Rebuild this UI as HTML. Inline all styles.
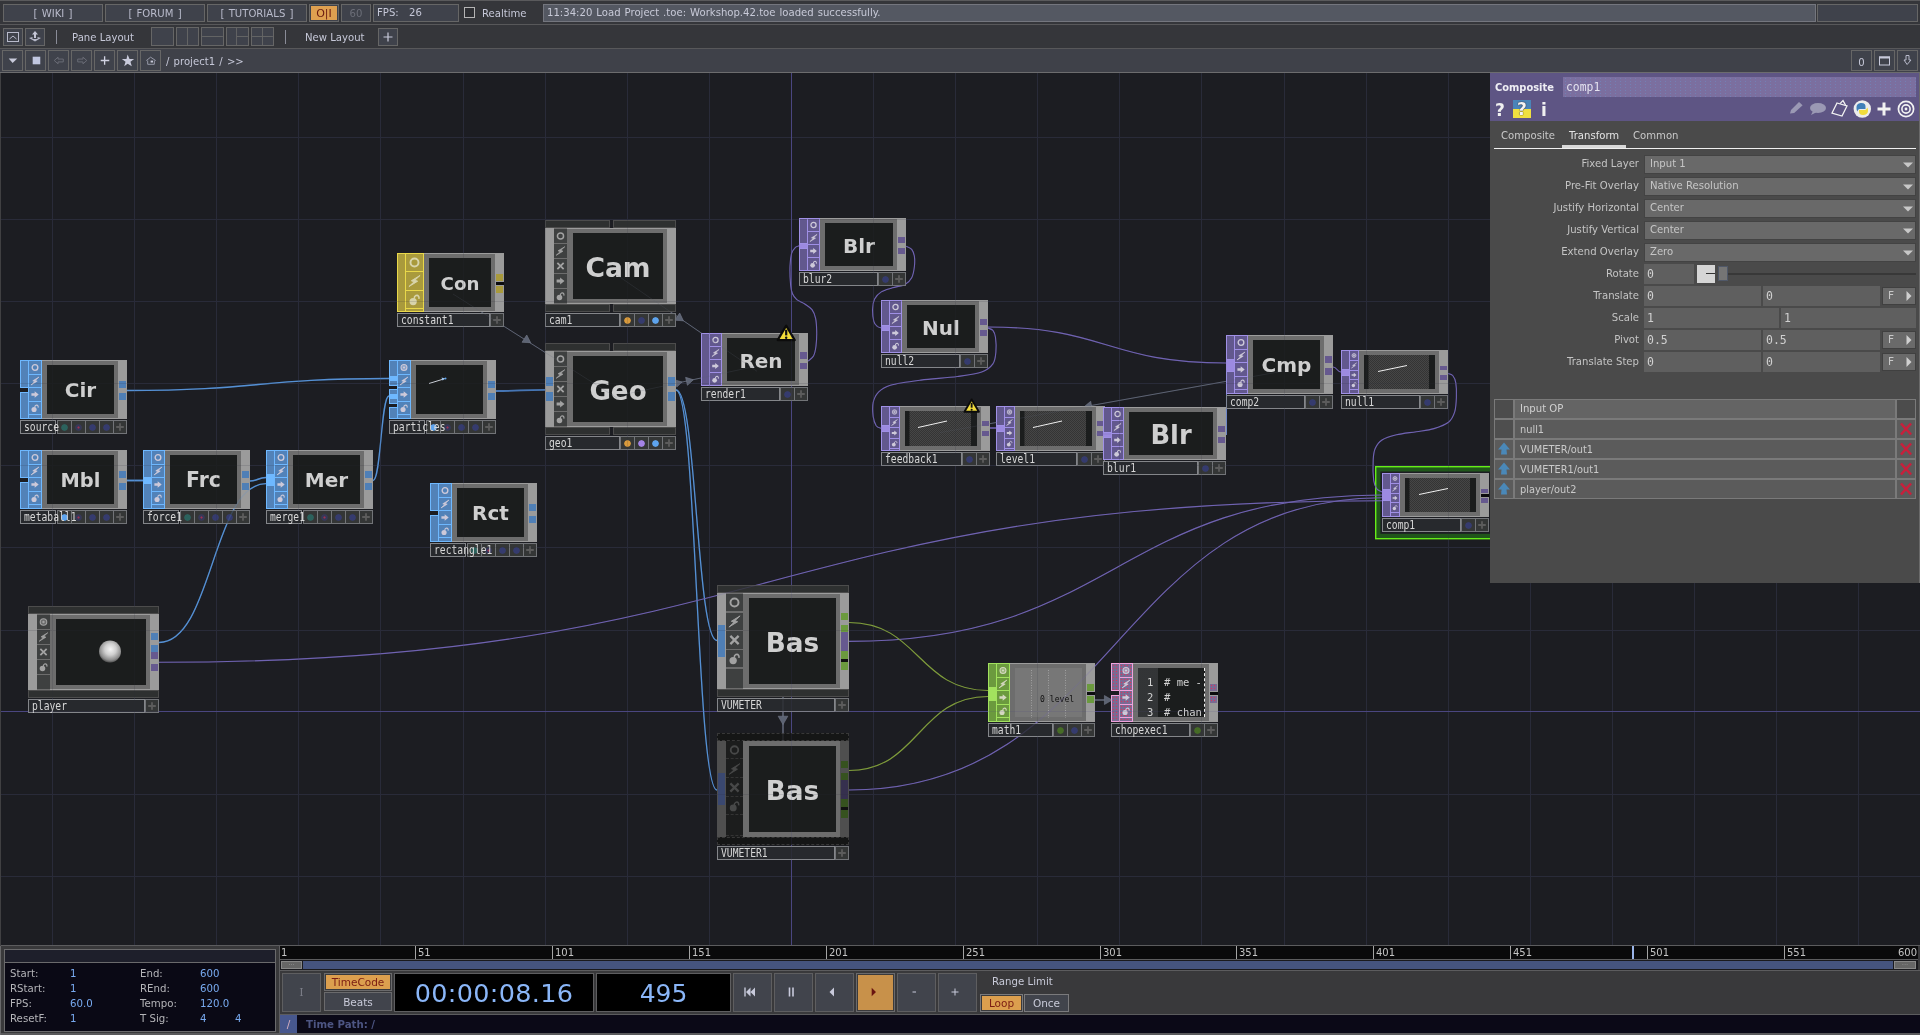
<!DOCTYPE html>
<html lang="en"><head><meta charset="utf-8"><title>TouchDesigner - Workshop.42.toe</title>
<style>
html,body{margin:0;padding:0}
body{width:1920px;height:1035px;position:relative;overflow:hidden;background:#35363a;font-family:"DejaVu Sans","Liberation Sans",sans-serif;font-size:11px;color:#c9cbd9}
div,span,svg{position:absolute;box-sizing:border-box}
span.t{white-space:nowrap}
#root{left:0;top:0;width:1920px;height:1035px;will-change:transform}
#net{left:0;top:73px;width:1920px;height:872px;overflow:hidden;background:#1c1d22}
#net>div,#net>svg{margin-top:-73px}
/* grid */
.gv{top:0;width:1px;height:1035px;background:#2b2c3a}
.gh{left:0;height:1px;width:1920px;background:#2b2c3a}
/* node parts */
.fr{background:#6d6d6d;border-top:1px solid #9c9c9c;border-bottom:1px solid #9c9c9c}
.vw{background:#1b1d1d}
.rs{background:#9b9b9b}
.lbl{background:#27292d;border:1px solid #84868a;overflow:visible}
.lbl span{left:2.5px;top:-1px;font-family:"DejaVu Sans Mono","Liberation Mono",monospace;font-size:11.5px;line-height:14px;color:#d8d8d8;white-space:nowrap;transform:scaleX(.842);transform-origin:0 0}
.mf{background:#343636;border:1px solid #727478}
.mf i{position:absolute;left:2.5px;top:2.5px;width:7px;height:7px;border-radius:50%}
.nt{font-family:"DejaVu Sans","Liberation Sans",sans-serif;font-weight:bold;color:#cfcfcf;text-align:center;white-space:nowrap}
.cs{background:#2e3030;border:1px solid #4c4c4c}
/* families */
.sop .ic,.sop .fl{background:#5282b8;border:1px solid #6eb8ff}
.sop .oc{background:#4f7fb6}
.sop .on{background:#6eb8ff}
.top .ic,.top .fl{background:#62588e;border:1px solid #a090e6}
.top .oc{background:#66598f}
.top .on{background:#9c8ae0}
.mat .ic,.mat .fl{background:#a99a3c;border:1px solid #e9d84a}
.mat .oc{background:#a99a3c}
.chop .ic,.chop .fl{background:#6b9a3e;border:1px solid #a2e25e}
.chop .oc{background:#6b9a3e}
.chop .on{background:#a2e25e}
.dat .ic,.dat .fl{background-color:#7b6a93;background-image:radial-gradient(#e0305a 0.7px,transparent 0.9px);background-size:3px 3px;border:1px solid #f0a2dc}
.dat .oc{background-color:#7b6a93;background-image:radial-gradient(#e0305a 0.7px,transparent 0.9px);background-size:3px 3px}
.comp .fl{background:#3e4040;border:0}
.fl svg{left:0;top:0;width:100%;height:100%}
.dim{opacity:.45}
/* top bars */
.btn{background:#3f424b;border:1px solid #666}
.ctr{display:flex;align-items:center;justify-content:center;white-space:nowrap}

.dimmed .rs{background-color:#4f4f4f;background-image:radial-gradient(#5c564e 0.5px,transparent 0.7px);background-size:2px 2px}
.dimmed .fl{background:#1c1d1d;border-bottom:1px dashed #343434}
.dimmed .fl svg{opacity:.32}
.dimmed .fc{background:#1c1d1d !important}
.dimmed .fr{border-color:#6d6d6d}
.dimmed .cs{background:#151616;border:1px dashed #383838}
.mat .fl svg{color:#d8d4aa !important}
.chop .fl svg{color:#d4d8c0 !important}

</style></head>
<body>
<svg width="0" height="0" style="left:-10px;top:-10px">
<defs>
<symbol id="i-ring" viewBox="0 0 14 14"><circle cx="7" cy="7" r="3.3" fill="none" stroke="currentColor" stroke-width="1.6"/></symbol>
<symbol id="i-ring2" viewBox="0 0 14 14"><circle cx="7" cy="7" r="3.5" fill="currentColor" fill-opacity=".45" stroke="currentColor" stroke-width="1.2"/><circle cx="7" cy="7" r="1.3" fill="currentColor"/></symbol>
<symbol id="i-bolt" viewBox="0 0 14 14"><path d="M11.6 2.4 L4.4 6.8 L6.6 7.7 L2.4 11.6 L9.6 7.2 L7.4 6.3 Z" fill="currentColor" stroke="currentColor" stroke-width=".8" stroke-linejoin="round"/></symbol>
<symbol id="i-arrow" viewBox="0 0 14 14"><path d="M2.8 5.5 H6.6 V3.2 L11.3 7 L6.6 10.8 V8.5 H2.8 Z" fill="currentColor"/></symbol>
<symbol id="i-lock" viewBox="0 0 14 14"><circle cx="5.9" cy="8.7" r="3" fill="currentColor"/><path d="M6.8 6.4 C6.6 3.6 9.4 2.9 10.4 4.4 C10.9 5.2 10.7 6 10.6 6.5" fill="none" stroke="currentColor" stroke-width="1.3"/></symbol>
<symbol id="i-x" viewBox="0 0 14 14"><path d="M3.6 3.6 L10.4 10.4 M10.4 3.6 L3.6 10.4" stroke="currentColor" stroke-width="1.9" fill="none"/></symbol>
<symbol id="i-plus" viewBox="0 0 14 14"><path d="M7 3.2 V10.8 M3.2 7 H10.8" stroke="#5c5c5c" stroke-width="1.8" fill="none"/></symbol>
<pattern id="chk" width="2" height="2" patternUnits="userSpaceOnUse"><rect width="2" height="2" fill="#343434"/><rect width="1" height="1" fill="#464646"/><rect x="1" y="1" width="1" height="1" fill="#464646"/></pattern>
<radialGradient id="ball" cx="52%" cy="40%" r="58%"><stop offset="0" stop-color="#f4f4f4"/><stop offset=".45" stop-color="#cfcfcf"/><stop offset=".85" stop-color="#8c8c8c"/><stop offset="1" stop-color="#5a5a5a"/></radialGradient>
</defs>
</svg>
<div id="root">
<div id="net">
<svg width="1920" height="1035" viewBox="0 0 1920 1035" style="left:0;top:0"><g id="gridg"><path d="M52.5 73V946M134.5 73V946M216.5 73V946M298.5 73V946M380.5 73V946M463.5 73V946M545.5 73V946M627.5 73V946M709.5 73V946M873.5 73V946M955.5 73V946M1037.5 73V946M1119.5 73V946M1201.5 73V946M1284.5 73V946M1366.5 73V946M1448.5 73V946M1530.5 73V946M1612.5 73V946M1694.5 73V946M1776.5 73V946M1858.5 73V946M0 137.5H1920M0 219.5H1920M0 301.5H1920M0 383.5H1920M0 465.5H1920M0 547.5H1920M0 630.5H1920M0 794.5H1920M0 876.5H1920" stroke="#292b39" stroke-width="1" fill="none"/><path d="M791.5 73V946M0 711.5H1920" stroke="#4a4680" stroke-width="1" fill="none"/></g><rect x="1375.7" y="466.7" width="600" height="72" fill="#20561b" stroke="#66ee18" stroke-width="1.4"/><rect x="1380.4" y="471.5" width="600" height="62.3" fill="#1c1d23"/><g id="wiresg"><path d="M453 294 L617 398" stroke="#5d6373" stroke-width="1" fill="none" /><path d="M5 0 L-2.50 4.33 L-2.50 -4.33 Z" fill="#5d6373" stroke="#767c8c" stroke-width=".5" transform="translate(526.5 340) rotate(33)"/><path d="M617 275.1 L757 371.3" stroke="#5d6373" stroke-width="1" fill="none" /><path d="M5 0 L-2.50 4.33 L-2.50 -4.33 Z" fill="#5d6373" stroke="#767c8c" stroke-width=".5" transform="translate(679.3 318) rotate(34.5)"/><path d="M617 396 L757 366" stroke="#5d6373" stroke-width="1" fill="none" /><path d="M4.2 0 L-2.10 3.64 L-2.10 -3.64 Z" fill="#5d6373" stroke="#767c8c" stroke-width=".5" transform="translate(678 383) rotate(-13)"/><path d="M4.7 0 L-2.35 4.07 L-2.35 -4.07 Z" fill="#5d6373" stroke="#767c8c" stroke-width=".5" transform="translate(688.8 380.8) rotate(-13)"/><path d="M1286 370.6 L940 432.6" stroke="#5d6373" stroke-width="1" fill="none" /><path d="M5 0 L-2.50 4.33 L-2.50 -4.33 Z" fill="#5d6373" stroke="#767c8c" stroke-width=".5" transform="translate(1089 406) rotate(170)"/><path d="M783 697 V741" stroke="#5d6373" stroke-width="1.6" fill="none" /><path d="M5.6 0 L-2.80 4.85 L-2.80 -4.85 Z" fill="#5d6373" stroke="#767c8c" stroke-width=".5" transform="translate(783 719) rotate(90)"/><path d="M1095 700 H1111" stroke="#5d6373" stroke-width="1.6" fill="none" /><path d="M5.2 0 L-2.60 4.50 L-2.60 -4.50 Z" fill="#5d6373" stroke="#767c8c" stroke-width=".5" transform="translate(1107 700) rotate(0)"/><path d="M127 390.5C258.0 390.5 258.0 378.5 389 378.5" stroke="#5590d4" stroke-width="1.5" fill="none" /><path d="M127 480.5 H143" stroke="#5590d4" stroke-width="1.8" fill="none" /><path d="M250 481C258.0 481 258.0 477.5 266 477.5" stroke="#5590d4" stroke-width="1.5" fill="none" /><path d="M159 642.5C212.5 642.5 212.5 483.6 266 483.6" stroke="#5590d4" stroke-width="1.3" fill="none" /><path d="M373 480.5C381.0 480.5 381.0 396 389 396" stroke="#5590d4" stroke-width="1.3" fill="none" /><path d="M496 391C520.5 391 520.5 389.8 545 389.8" stroke="#4676b4" stroke-width="1.8" fill="none" /><path d="M676 389.8C696.5 389.8 696.5 640.5 717 640.5" stroke="#5590d4" stroke-width="1.3" fill="none" /><path d="M676 390.2C696.5 390.2 696.5 790 717 790" stroke="#5590d4" stroke-width="1.3" fill="none" /><path d="M808 361.2C808.9 360.3 812.2 358.5 813.5 356C814.8 353.5 815.5 350.1 816 346C816.5 341.9 816.8 336.0 816.7 331.4C816.6 326.8 816.4 322.0 815.6 318.4C814.8 314.8 813.8 312.1 812 309.7C810.2 307.3 807.3 305.7 804.8 304C802.3 302.3 798.8 301.3 796.8 299.6C794.8 297.9 793.5 296.2 792.5 293.8C791.5 291.4 791.0 289.6 790.6 285C790.2 280.4 789.8 271.5 790 266.2C790.2 260.9 790.8 256.3 791.7 253.2C792.6 250.1 794.1 248.7 795.4 247.4C796.7 246.2 798.6 246.0 799.3 245.7" stroke="#7063b2" stroke-width="1.1" fill="none" /><path d="M906.2 246.2C907.1 246.7 910.3 247.6 911.7 249.3C913.1 251.0 914.0 253.5 914.4 256.4C914.8 259.3 914.8 262.9 914.4 266.5C914.0 270.1 913.3 274.7 911.7 277.7C910.1 280.7 908.2 282.7 905 284.4C901.8 286.1 896.5 286.6 892.5 287.8C888.5 289.1 884.3 290.0 881.3 291.9C878.3 293.8 876.0 296.1 874.6 299C873.2 301.9 872.7 305.4 872.6 309.1C872.5 312.8 873.0 318.4 873.8 321.3C874.6 324.2 876.0 325.2 877.2 326.3C878.5 327.4 880.6 327.6 881.3 327.8" stroke="#7063b2" stroke-width="1.1" fill="none" /><path d="M988 327C1107.0 327 1107.0 363 1226 363" stroke="#7063b2" stroke-width="1.1" fill="none" /><path d="M987.8 328C988.6 328.4 991.6 328.8 992.9 330.4C994.2 332.0 995.0 333.9 995.5 337.5C996.0 341.1 996.3 347.3 995.9 351.7C995.5 356.1 995.3 360.5 992.9 363.9C990.5 367.3 987.6 369.9 981.7 372C975.8 374.1 967.5 375.1 957.4 376.5C947.3 377.9 932.1 378.7 920.9 380.1C909.7 381.6 897.5 383.2 890.4 385.2C883.3 387.2 881.2 389.4 878.3 392.3C875.4 395.2 874.1 398.3 873.2 402.4C872.4 406.4 872.7 412.7 873.2 416.6C873.7 420.5 874.9 423.7 876.2 425.7C877.6 427.7 880.4 427.9 881.3 428.4" stroke="#7063b2" stroke-width="1.1" fill="none" /><path d="M990 428 H996" stroke="#7063b2" stroke-width="1.5" fill="none" /><path d="M1095 434 H1111" stroke="#7063b2" stroke-width="1.5" fill="none" /><path d="M1226.5 370 V435" stroke="#6e86c8" stroke-width="1" fill="none" /><path d="M1333 367C1337.0 367 1337.0 372 1341 372" stroke="#7063b2" stroke-width="1.1" fill="none" /><path d="M1448.1 373.5C1448.9 373.8 1451.4 373.9 1452.7 375.5C1454.0 377.1 1455.2 379.2 1455.8 382.8C1456.4 386.4 1456.6 392.5 1456.4 397.4C1456.2 402.2 1456.0 407.8 1454.7 411.9C1453.4 416.0 1452.0 419.5 1448.5 422.3C1445.0 425.1 1439.4 427.0 1434 428.6C1428.6 430.2 1422.5 430.7 1416.3 431.7C1410.0 432.7 1402.2 433.4 1396.5 434.8C1390.8 436.2 1385.5 437.8 1382 440C1378.5 442.2 1376.8 445.0 1375.3 448.3C1373.8 451.6 1373.5 454.3 1373.2 459.7C1372.9 465.1 1373.1 475.6 1373.7 480.5C1374.3 485.4 1375.4 486.9 1376.8 488.8C1378.2 490.7 1381.1 491.5 1382 492" stroke="#7063b2" stroke-width="1.1" fill="none" /><path d="M849 641.4C1115.5 641.4 1115.5 495 1382 495" stroke="#7063b2" stroke-width="1.1" fill="none" /><path d="M849 790C1115.5 790 1115.5 497.7 1382 497.7" stroke="#7063b2" stroke-width="1.1" fill="none" /><path d="M159 662.3C770.5 662.3 770.5 500.7 1382 500.7" stroke="#7063b2" stroke-width="1.1" fill="none" /><path d="M849 622.5C918.5 622.5 918.5 690.5 988 690.5" stroke="#7f9c3c" stroke-width="1.1" fill="none" /><path d="M849 770.5C918.5 770.5 918.5 696.5 988 696.5" stroke="#7f9c3c" stroke-width="1.1" fill="none" /></g></svg>
<div class="sop " style="left:0;top:0;width:0;height:0"><div class="ic" style="left:20px;top:360px;width:9px;height:28px;"></div><div class="ic" style="left:20px;top:392px;width:9px;height:27px;"></div><div class="fl" style="left:28px;top:360px;width:14px;height:15px;"><svg viewBox="0 0 14 14" preserveAspectRatio="xMidYMid meet" style="color:#cdc9d9"><use href="#i-ring"/></svg></div><div class="fl" style="left:28px;top:374px;width:14px;height:14px;"><svg viewBox="0 0 14 14" preserveAspectRatio="xMidYMid meet" style="color:#cdc9d9"><use href="#i-bolt"/></svg></div><div class="fl" style="left:28px;top:387px;width:14px;height:15px;"><svg viewBox="0 0 14 14" preserveAspectRatio="xMidYMid meet" style="color:#cdc9d9"><use href="#i-arrow"/></svg></div><div class="fl" style="left:28px;top:401px;width:14px;height:14px;"><svg viewBox="0 0 14 14" preserveAspectRatio="xMidYMid meet" style="color:#cdc9d9"><use href="#i-lock"/></svg></div><div class="fl" style="left:28px;top:414px;width:14px;height:5px;"></div><div class="fr" style="left:42px;top:360px;width:76px;height:59px;"></div><div class="vw nt" style="left:47px;top:365px;width:67px;height:49px;font-size:20px;line-height:20px"><span style="left:0;width:67px;top:15.1px">Cir</span></div><div class="rs" style="left:118px;top:360px;width:9px;height:59px;"></div><div class="oc" style="left:119px;top:381px;width:7px;height:7px;"></div><div class="oc" style="left:119px;top:393px;width:7px;height:7px;"></div><div class="mf" style="left:57px;top:420px;width:15px;height:14px;"><i style="background:radial-gradient(circle,#2c625d 58%,transparent 80%)"></i></div><div class="mf" style="left:71px;top:420px;width:15px;height:14px;"><i style="background:radial-gradient(circle,#a03050 12%,#363858 30%,#363858 58%,transparent 80%)"></i></div><div class="mf" style="left:85px;top:420px;width:15px;height:14px;"><i style="background:radial-gradient(circle,#353b6e 58%,transparent 80%)"></i></div><div class="mf" style="left:99px;top:420px;width:15px;height:14px;"><i style="background:radial-gradient(circle,#353b6e 58%,transparent 80%)"></i></div><div class="mf" style="left:113px;top:420px;width:14px;height:14px;"><svg viewBox="0 0 14 14" style="left:-1px;top:-1px;width:14px;height:14px"><use href="#i-plus"/></svg></div><div class="lbl" style="left:20px;top:420px;width:36px;height:14px;"><span>source</span></div></div>
<div class="sop " style="left:0;top:0;width:0;height:0"><div class="ic" style="left:20px;top:450px;width:9px;height:28px;"></div><div class="ic" style="left:20px;top:482px;width:9px;height:27px;"></div><div class="fl" style="left:28px;top:450px;width:14px;height:15px;"><svg viewBox="0 0 14 14" preserveAspectRatio="xMidYMid meet" style="color:#cdc9d9"><use href="#i-ring"/></svg></div><div class="fl" style="left:28px;top:464px;width:14px;height:14px;"><svg viewBox="0 0 14 14" preserveAspectRatio="xMidYMid meet" style="color:#cdc9d9"><use href="#i-bolt"/></svg></div><div class="fl" style="left:28px;top:477px;width:14px;height:15px;"><svg viewBox="0 0 14 14" preserveAspectRatio="xMidYMid meet" style="color:#cdc9d9"><use href="#i-arrow"/></svg></div><div class="fl" style="left:28px;top:491px;width:14px;height:14px;"><svg viewBox="0 0 14 14" preserveAspectRatio="xMidYMid meet" style="color:#cdc9d9"><use href="#i-lock"/></svg></div><div class="fl" style="left:28px;top:504px;width:14px;height:5px;"></div><div class="fr" style="left:42px;top:450px;width:76px;height:59px;"></div><div class="vw nt" style="left:47px;top:455px;width:67px;height:49px;font-size:19.4px;line-height:19.4px"><span style="left:0;width:67px;top:15.6px">Mbl</span></div><div class="rs" style="left:118px;top:450px;width:9px;height:59px;"></div><div class="oc" style="left:119px;top:471px;width:7px;height:7px;"></div><div class="oc" style="left:119px;top:483px;width:7px;height:7px;"></div><div class="mf" style="left:57px;top:510px;width:15px;height:14px;"><i style="background:radial-gradient(circle,#5ea4ee 58%,transparent 80%)"></i></div><div class="mf" style="left:71px;top:510px;width:15px;height:14px;"><i style="background:radial-gradient(circle,#a03050 12%,#363858 30%,#363858 58%,transparent 80%)"></i></div><div class="mf" style="left:85px;top:510px;width:15px;height:14px;"><i style="background:radial-gradient(circle,#353b6e 58%,transparent 80%)"></i></div><div class="mf" style="left:99px;top:510px;width:15px;height:14px;"><i style="background:radial-gradient(circle,#353b6e 58%,transparent 80%)"></i></div><div class="mf" style="left:113px;top:510px;width:14px;height:14px;"><svg viewBox="0 0 14 14" style="left:-1px;top:-1px;width:14px;height:14px"><use href="#i-plus"/></svg></div><div class="lbl" style="left:20px;top:510px;width:36px;height:14px;"><span>metaball1</span></div></div>
<div class="sop " style="left:0;top:0;width:0;height:0"><div class="ic" style="left:143px;top:450px;width:9px;height:28px;"></div><div class="on" style="left:143px;top:478px;width:9px;height:5px;"></div><div class="ic" style="left:143px;top:483px;width:9px;height:26px;"></div><div class="fl" style="left:151px;top:450px;width:14px;height:15px;"><svg viewBox="0 0 14 14" preserveAspectRatio="xMidYMid meet" style="color:#cdc9d9"><use href="#i-ring"/></svg></div><div class="fl" style="left:151px;top:464px;width:14px;height:14px;"><svg viewBox="0 0 14 14" preserveAspectRatio="xMidYMid meet" style="color:#cdc9d9"><use href="#i-bolt"/></svg></div><div class="fl" style="left:151px;top:477px;width:14px;height:15px;"><svg viewBox="0 0 14 14" preserveAspectRatio="xMidYMid meet" style="color:#cdc9d9"><use href="#i-arrow"/></svg></div><div class="fl" style="left:151px;top:491px;width:14px;height:14px;"><svg viewBox="0 0 14 14" preserveAspectRatio="xMidYMid meet" style="color:#cdc9d9"><use href="#i-lock"/></svg></div><div class="fl" style="left:151px;top:504px;width:14px;height:5px;"></div><div class="fr" style="left:165px;top:450px;width:76px;height:59px;"></div><div class="vw nt" style="left:170px;top:455px;width:67px;height:49px;font-size:20.4px;line-height:20.4px"><span style="left:0;width:67px;top:15.1px">Frc</span></div><div class="rs" style="left:241px;top:450px;width:9px;height:59px;"></div><div class="oc" style="left:242px;top:471px;width:7px;height:7px;"></div><div class="oc" style="left:242px;top:483px;width:7px;height:7px;"></div><div class="mf" style="left:180px;top:510px;width:15px;height:14px;"><i style="background:radial-gradient(circle,#2c625d 58%,transparent 80%)"></i></div><div class="mf" style="left:194px;top:510px;width:15px;height:14px;"><i style="background:radial-gradient(circle,#a03050 12%,#363858 30%,#363858 58%,transparent 80%)"></i></div><div class="mf" style="left:208px;top:510px;width:15px;height:14px;"><i style="background:radial-gradient(circle,#353b6e 58%,transparent 80%)"></i></div><div class="mf" style="left:222px;top:510px;width:15px;height:14px;"><i style="background:radial-gradient(circle,#353b6e 58%,transparent 80%)"></i></div><div class="mf" style="left:236px;top:510px;width:14px;height:14px;"><svg viewBox="0 0 14 14" style="left:-1px;top:-1px;width:14px;height:14px"><use href="#i-plus"/></svg></div><div class="lbl" style="left:143px;top:510px;width:36px;height:14px;"><span>force1</span></div></div>
<div class="sop " style="left:0;top:0;width:0;height:0"><div class="ic" style="left:266px;top:450px;width:9px;height:25px;"></div><div class="on" style="left:266px;top:475px;width:9px;height:10px;"></div><div class="ic" style="left:266px;top:485px;width:9px;height:24px;"></div><div class="fl" style="left:274px;top:450px;width:14px;height:15px;"><svg viewBox="0 0 14 14" preserveAspectRatio="xMidYMid meet" style="color:#cdc9d9"><use href="#i-ring"/></svg></div><div class="fl" style="left:274px;top:464px;width:14px;height:14px;"><svg viewBox="0 0 14 14" preserveAspectRatio="xMidYMid meet" style="color:#cdc9d9"><use href="#i-bolt"/></svg></div><div class="fl" style="left:274px;top:477px;width:14px;height:15px;"><svg viewBox="0 0 14 14" preserveAspectRatio="xMidYMid meet" style="color:#cdc9d9"><use href="#i-arrow"/></svg></div><div class="fl" style="left:274px;top:491px;width:14px;height:14px;"><svg viewBox="0 0 14 14" preserveAspectRatio="xMidYMid meet" style="color:#cdc9d9"><use href="#i-lock"/></svg></div><div class="fl" style="left:274px;top:504px;width:14px;height:5px;"></div><div class="fr" style="left:288px;top:450px;width:76px;height:59px;"></div><div class="vw nt" style="left:293px;top:455px;width:67px;height:49px;font-size:20px;line-height:20px"><span style="left:0;width:67px;top:15.1px">Mer</span></div><div class="rs" style="left:364px;top:450px;width:9px;height:59px;"></div><div class="oc" style="left:365px;top:471px;width:7px;height:7px;"></div><div class="oc" style="left:365px;top:483px;width:7px;height:7px;"></div><div class="mf" style="left:303px;top:510px;width:15px;height:14px;"><i style="background:radial-gradient(circle,#2c625d 58%,transparent 80%)"></i></div><div class="mf" style="left:317px;top:510px;width:15px;height:14px;"><i style="background:radial-gradient(circle,#a03050 12%,#363858 30%,#363858 58%,transparent 80%)"></i></div><div class="mf" style="left:331px;top:510px;width:15px;height:14px;"><i style="background:radial-gradient(circle,#353b6e 58%,transparent 80%)"></i></div><div class="mf" style="left:345px;top:510px;width:15px;height:14px;"><i style="background:radial-gradient(circle,#353b6e 58%,transparent 80%)"></i></div><div class="mf" style="left:359px;top:510px;width:14px;height:14px;"><svg viewBox="0 0 14 14" style="left:-1px;top:-1px;width:14px;height:14px"><use href="#i-plus"/></svg></div><div class="lbl" style="left:266px;top:510px;width:36px;height:14px;"><span>merge1</span></div></div>
<div class="sop " style="left:0;top:0;width:0;height:0"><div class="ic" style="left:430px;top:483px;width:9px;height:28px;"></div><div class="ic" style="left:430px;top:515px;width:9px;height:27px;"></div><div class="fl" style="left:438px;top:483px;width:14px;height:15px;"><svg viewBox="0 0 14 14" preserveAspectRatio="xMidYMid meet" style="color:#cdc9d9"><use href="#i-ring"/></svg></div><div class="fl" style="left:438px;top:497px;width:14px;height:14px;"><svg viewBox="0 0 14 14" preserveAspectRatio="xMidYMid meet" style="color:#cdc9d9"><use href="#i-bolt"/></svg></div><div class="fl" style="left:438px;top:510px;width:14px;height:15px;"><svg viewBox="0 0 14 14" preserveAspectRatio="xMidYMid meet" style="color:#cdc9d9"><use href="#i-arrow"/></svg></div><div class="fl" style="left:438px;top:524px;width:14px;height:14px;"><svg viewBox="0 0 14 14" preserveAspectRatio="xMidYMid meet" style="color:#cdc9d9"><use href="#i-lock"/></svg></div><div class="fl" style="left:438px;top:537px;width:14px;height:5px;"></div><div class="fr" style="left:452px;top:483px;width:76px;height:59px;"></div><div class="vw nt" style="left:457px;top:488px;width:67px;height:49px;font-size:20px;line-height:20px"><span style="left:0;width:67px;top:15.1px">Rct</span></div><div class="rs" style="left:528px;top:483px;width:9px;height:59px;"></div><div class="oc" style="left:529px;top:504px;width:7px;height:7px;"></div><div class="oc" style="left:529px;top:516px;width:7px;height:7px;"></div><div class="mf" style="left:467px;top:543px;width:15px;height:14px;"><i style="background:radial-gradient(circle,#2c625d 58%,transparent 80%)"></i></div><div class="mf" style="left:481px;top:543px;width:15px;height:14px;"><i style="background:radial-gradient(circle,#a03050 12%,#363858 30%,#363858 58%,transparent 80%)"></i></div><div class="mf" style="left:495px;top:543px;width:15px;height:14px;"><i style="background:radial-gradient(circle,#353b6e 58%,transparent 80%)"></i></div><div class="mf" style="left:509px;top:543px;width:15px;height:14px;"><i style="background:radial-gradient(circle,#353b6e 58%,transparent 80%)"></i></div><div class="mf" style="left:523px;top:543px;width:14px;height:14px;"><svg viewBox="0 0 14 14" style="left:-1px;top:-1px;width:14px;height:14px"><use href="#i-plus"/></svg></div><div class="lbl" style="left:430px;top:543px;width:36px;height:14px;"><span>rectangle1</span></div></div>
<div class="sop " style="left:0;top:0;width:0;height:0"><div class="ic" style="left:389px;top:360px;width:9px;height:26px;"></div><div class="on" style="left:389px;top:376px;width:9px;height:5px;"></div><div class="ic" style="left:389px;top:389px;width:9px;height:15px;"></div><div class="on" style="left:389px;top:394px;width:9px;height:5px;"></div><div class="ic" style="left:389px;top:407px;width:9px;height:12px;"></div><div class="fl" style="left:397px;top:360px;width:14px;height:15px;"><svg viewBox="0 0 14 14" preserveAspectRatio="xMidYMid meet" style="color:#cdc9d9"><use href="#i-ring2"/></svg></div><div class="fl" style="left:397px;top:374px;width:14px;height:14px;"><svg viewBox="0 0 14 14" preserveAspectRatio="xMidYMid meet" style="color:#cdc9d9"><use href="#i-bolt"/></svg></div><div class="fl" style="left:397px;top:387px;width:14px;height:15px;"><svg viewBox="0 0 14 14" preserveAspectRatio="xMidYMid meet" style="color:#cdc9d9"><use href="#i-arrow"/></svg></div><div class="fl" style="left:397px;top:401px;width:14px;height:14px;"><svg viewBox="0 0 14 14" preserveAspectRatio="xMidYMid meet" style="color:#cdc9d9"><use href="#i-lock"/></svg></div><div class="fl" style="left:397px;top:414px;width:14px;height:5px;"></div><div class="fr" style="left:411px;top:360px;width:76px;height:59px;"></div><div class="vw" style="left:416px;top:365px;width:67px;height:49px;"><svg viewBox="0 0 67 49" style="left:0;top:0;width:67px;height:49px"><path d="M13 18.5 L27 14.2" stroke="#c8ccd4" stroke-width="1"/><path d="M25.5 12.5 L29.5 13.6 L26.6 15.6 Z" fill="#9ec4ee"/><circle cx="29.5" cy="13.6" r="1" fill="#5ea4ee"/></svg></div><div class="rs" style="left:487px;top:360px;width:9px;height:59px;"></div><div class="oc" style="left:488px;top:381px;width:7px;height:7px;"></div><div class="oc" style="left:488px;top:393px;width:7px;height:7px;"></div><div class="mf" style="left:426px;top:420px;width:15px;height:14px;"><i style="background:radial-gradient(circle,#5ea4ee 58%,transparent 80%)"></i></div><div class="mf" style="left:440px;top:420px;width:15px;height:14px;"><i style="background:radial-gradient(circle,#a03050 12%,#363858 30%,#363858 58%,transparent 80%)"></i></div><div class="mf" style="left:454px;top:420px;width:15px;height:14px;"><i style="background:radial-gradient(circle,#353b6e 58%,transparent 80%)"></i></div><div class="mf" style="left:468px;top:420px;width:15px;height:14px;"><i style="background:radial-gradient(circle,#353b6e 58%,transparent 80%)"></i></div><div class="mf" style="left:482px;top:420px;width:14px;height:14px;"><svg viewBox="0 0 14 14" style="left:-1px;top:-1px;width:14px;height:14px"><use href="#i-plus"/></svg></div><div class="lbl" style="left:389px;top:420px;width:36px;height:14px;"><span>particles</span></div></div>
<div class="mat " style="left:0;top:0;width:0;height:0"><div class="ic" style="left:397px;top:253px;width:9px;height:59px;"></div><div class="fl" style="left:405px;top:253px;width:19px;height:19px;"><svg viewBox="0 0 14 14" preserveAspectRatio="xMidYMid meet" style="color:#cdc9d9"><use href="#i-ring"/></svg></div><div class="fl" style="left:405px;top:271px;width:19px;height:20px;"><svg viewBox="0 0 14 14" preserveAspectRatio="xMidYMid meet" style="color:#cdc9d9"><use href="#i-bolt"/></svg></div><div class="fl" style="left:405px;top:290px;width:19px;height:19px;"><svg viewBox="0 0 14 14" preserveAspectRatio="xMidYMid meet" style="color:#cdc9d9"><use href="#i-lock"/></svg></div><div class="fl" style="left:405px;top:308px;width:19px;height:4px;"></div><div class="fr" style="left:424px;top:253px;width:71px;height:59px;"></div><div class="vw nt" style="left:429px;top:258px;width:62px;height:49px;font-size:18.2px;line-height:18.2px"><span style="left:0;width:62px;top:16.6px">Con</span></div><div class="rs" style="left:495px;top:253px;width:9px;height:59px;"></div><div class="oc" style="left:496px;top:274px;width:7px;height:7px;"></div><div class="oc" style="left:496px;top:286px;width:7px;height:7px;"></div><div style="left:496px;top:282px;width:8px;height:3px;background:#0c0c0e"></div><div class="mf" style="left:490px;top:313px;width:14px;height:14px;"><svg viewBox="0 0 14 14" style="left:-1px;top:-1px;width:14px;height:14px"><use href="#i-plus"/></svg></div><div class="lbl" style="left:397px;top:313px;width:93px;height:14px;"><span>constant1</span></div></div>
<div class="comp " style="left:0;top:0;width:0;height:0"><div class="cs" style="left:545px;top:220px;width:65px;height:8px;"></div><div class="cs" style="left:613px;top:220px;width:63px;height:8px;"></div><div class="cs" style="left:545px;top:304px;width:65px;height:8px;"></div><div class="cs" style="left:613px;top:304px;width:63px;height:8px;"></div><div class="rs" style="left:545px;top:228px;width:9px;height:76px;"></div><div class="fc" style="left:554px;top:228px;width:14px;height:76px;background:#6d6d6d"></div><div class="fl" style="left:554px;top:229px;width:13px;height:14px;"><svg viewBox="0 0 14 14" preserveAspectRatio="xMidYMid meet" style="color:#a2a2a2"><use href="#i-ring"/></svg></div><div class="fl" style="left:554px;top:244px;width:13px;height:14px;"><svg viewBox="0 0 14 14" preserveAspectRatio="xMidYMid meet" style="color:#a2a2a2"><use href="#i-bolt"/></svg></div><div class="fl" style="left:554px;top:259px;width:13px;height:14px;"><svg viewBox="0 0 14 14" preserveAspectRatio="xMidYMid meet" style="color:#a2a2a2"><use href="#i-x"/></svg></div><div class="fl" style="left:554px;top:274px;width:13px;height:14px;"><svg viewBox="0 0 14 14" preserveAspectRatio="xMidYMid meet" style="color:#a2a2a2"><use href="#i-arrow"/></svg></div><div class="fl" style="left:554px;top:289px;width:13px;height:14px;"><svg viewBox="0 0 14 14" preserveAspectRatio="xMidYMid meet" style="color:#a2a2a2"><use href="#i-lock"/></svg></div><div class="fr" style="left:567px;top:228px;width:100px;height:76px;"></div><div class="vw nt" style="left:573px;top:233px;width:90px;height:66px;font-size:26.6px;line-height:26.6px"><span style="left:0;width:90px;top:21.5px">Cam</span></div><div class="rs" style="left:667px;top:228px;width:9px;height:76px;"></div><div class="mf" style="left:620px;top:313px;width:15px;height:14px;"><i style="background:radial-gradient(circle,#d99a3c 58%,transparent 80%)"></i></div><div class="mf" style="left:634px;top:313px;width:15px;height:14px;"><i style="background:radial-gradient(circle,#353b6e 58%,transparent 80%)"></i></div><div class="mf" style="left:648px;top:313px;width:15px;height:14px;"><i style="background:radial-gradient(circle,#5ea4ee 58%,transparent 80%)"></i></div><div class="mf" style="left:662px;top:313px;width:14px;height:14px;"><svg viewBox="0 0 14 14" style="left:-1px;top:-1px;width:14px;height:14px"><use href="#i-plus"/></svg></div><div class="lbl" style="left:545px;top:313px;width:75px;height:14px;"><span>cam1</span></div></div>
<div class="comp " style="left:0;top:0;width:0;height:0"><div class="cs" style="left:545px;top:343px;width:65px;height:8px;"></div><div class="cs" style="left:613px;top:343px;width:63px;height:8px;"></div><div class="cs" style="left:545px;top:427px;width:65px;height:8px;"></div><div class="cs" style="left:613px;top:427px;width:63px;height:8px;"></div><div class="rs" style="left:545px;top:351px;width:9px;height:76px;"></div><div style="left:546px;top:377px;width:7px;height:9px;background:#4f7fb6"></div><div style="left:546px;top:392px;width:7px;height:9px;background:#4f7fb6"></div><div class="fc" style="left:554px;top:351px;width:14px;height:76px;background:#6d6d6d"></div><div class="fl" style="left:554px;top:352px;width:13px;height:14px;"><svg viewBox="0 0 14 14" preserveAspectRatio="xMidYMid meet" style="color:#a2a2a2"><use href="#i-ring"/></svg></div><div class="fl" style="left:554px;top:367px;width:13px;height:14px;"><svg viewBox="0 0 14 14" preserveAspectRatio="xMidYMid meet" style="color:#a2a2a2"><use href="#i-bolt"/></svg></div><div class="fl" style="left:554px;top:382px;width:13px;height:14px;"><svg viewBox="0 0 14 14" preserveAspectRatio="xMidYMid meet" style="color:#a2a2a2"><use href="#i-x"/></svg></div><div class="fl" style="left:554px;top:397px;width:13px;height:14px;"><svg viewBox="0 0 14 14" preserveAspectRatio="xMidYMid meet" style="color:#a2a2a2"><use href="#i-arrow"/></svg></div><div class="fl" style="left:554px;top:412px;width:13px;height:14px;"><svg viewBox="0 0 14 14" preserveAspectRatio="xMidYMid meet" style="color:#a2a2a2"><use href="#i-lock"/></svg></div><div class="fr" style="left:567px;top:351px;width:100px;height:76px;"></div><div class="vw nt" style="left:573px;top:356px;width:90px;height:66px;font-size:26.2px;line-height:26.2px"><span style="left:0;width:90px;top:21.8px">Geo</span></div><div class="rs" style="left:667px;top:351px;width:9px;height:76px;"></div><div style="left:668px;top:377px;width:7px;height:9px;background:#4f7fb6"></div><div style="left:668px;top:392px;width:7px;height:9px;background:#4f7fb6"></div><div class="mf" style="left:620px;top:436px;width:15px;height:14px;"><i style="background:radial-gradient(circle,#d99a3c 58%,transparent 80%)"></i></div><div class="mf" style="left:634px;top:436px;width:15px;height:14px;"><i style="background:radial-gradient(circle,#a483e6 58%,transparent 80%)"></i></div><div class="mf" style="left:648px;top:436px;width:15px;height:14px;"><i style="background:radial-gradient(circle,#5ea4ee 58%,transparent 80%)"></i></div><div class="mf" style="left:662px;top:436px;width:14px;height:14px;"><svg viewBox="0 0 14 14" style="left:-1px;top:-1px;width:14px;height:14px"><use href="#i-plus"/></svg></div><div class="lbl" style="left:545px;top:436px;width:75px;height:14px;"><span>geo1</span></div></div>
<div class="comp " style="left:0;top:0;width:0;height:0"><div class="cs" style="left:28px;top:606px;width:131px;height:8px;"></div><div class="cs" style="left:28px;top:690px;width:131px;height:8px;"></div><div class="rs" style="left:28px;top:614px;width:9px;height:76px;"></div><div class="fc" style="left:37px;top:614px;width:14px;height:76px;background:#6d6d6d"></div><div class="fl" style="left:37px;top:615px;width:13px;height:14px;"><svg viewBox="0 0 14 14" preserveAspectRatio="xMidYMid meet" style="color:#a2a2a2"><use href="#i-ring2"/></svg></div><div class="fl" style="left:37px;top:630px;width:13px;height:14px;"><svg viewBox="0 0 14 14" preserveAspectRatio="xMidYMid meet" style="color:#a2a2a2"><use href="#i-bolt"/></svg></div><div class="fl" style="left:37px;top:645px;width:13px;height:14px;"><svg viewBox="0 0 14 14" preserveAspectRatio="xMidYMid meet" style="color:#a2a2a2"><use href="#i-x"/></svg></div><div class="fl" style="left:37px;top:660px;width:13px;height:14px;"><svg viewBox="0 0 14 14" preserveAspectRatio="xMidYMid meet" style="color:#a2a2a2"><use href="#i-lock"/></svg></div><div class="fl" style="left:37px;top:675px;width:13px;height:14px;"></div><div class="fr" style="left:50px;top:614px;width:100px;height:76px;"></div><div class="vw" style="left:56px;top:619px;width:90px;height:66px;"><svg viewBox="0 0 90 66" style="left:0;top:0;width:90px;height:66px"><circle cx="54" cy="32.5" r="11" fill="url(#ball)"/></svg></div><div class="rs" style="left:150px;top:614px;width:9px;height:76px;"></div><div style="left:151px;top:633px;width:7px;height:7px;background:#4f7fb6"></div><div style="left:151px;top:645px;width:7px;height:7px;background:#4f7fb6"></div><div style="left:151px;top:652px;width:7px;height:7px;background:#66598f"></div><div style="left:151px;top:664px;width:7px;height:7px;background:#66598f"></div><div class="mf" style="left:145px;top:699px;width:14px;height:14px;"><svg viewBox="0 0 14 14" style="left:-1px;top:-1px;width:14px;height:14px"><use href="#i-plus"/></svg></div><div class="lbl" style="left:28px;top:699px;width:117px;height:14px;"><span>player</span></div></div>
<div class="comp " style="left:0;top:0;width:0;height:0"><div class="cs" style="left:717px;top:585px;width:132px;height:8px;"></div><div class="cs" style="left:717px;top:689px;width:132px;height:8px;"></div><div class="rs" style="left:717px;top:593px;width:9px;height:96px;"></div><div style="left:718px;top:625px;width:7px;height:32px;background:#4f7fb6"></div><div class="fc" style="left:726px;top:593px;width:18px;height:96px;background:#6d6d6d"></div><div class="fl" style="left:726px;top:594px;width:17px;height:17px;"><svg viewBox="0 0 14 14" preserveAspectRatio="xMidYMid meet" style="color:#a2a2a2"><use href="#i-ring"/></svg></div><div class="fl" style="left:726px;top:613px;width:17px;height:17px;"><svg viewBox="0 0 14 14" preserveAspectRatio="xMidYMid meet" style="color:#a2a2a2"><use href="#i-bolt"/></svg></div><div class="fl" style="left:726px;top:631px;width:17px;height:18px;"><svg viewBox="0 0 14 14" preserveAspectRatio="xMidYMid meet" style="color:#a2a2a2"><use href="#i-x"/></svg></div><div class="fl" style="left:726px;top:650px;width:17px;height:17px;"><svg viewBox="0 0 14 14" preserveAspectRatio="xMidYMid meet" style="color:#a2a2a2"><use href="#i-lock"/></svg></div><div class="fl" style="left:726px;top:669px;width:17px;height:19px;"></div><div class="fr" style="left:743px;top:593px;width:97px;height:96px;"></div><div class="vw nt" style="left:749px;top:598px;width:87px;height:86px;font-size:26.3px;line-height:26.3px"><span style="left:0;width:87px;top:31.8px">Bas</span></div><div class="rs" style="left:840px;top:593px;width:9px;height:96px;"></div><div style="left:841px;top:613px;width:7px;height:7px;background:#6b9a3e"></div><div style="left:841px;top:625px;width:7px;height:7px;background:#6b9a3e"></div><div style="left:841px;top:632px;width:7px;height:19px;background:#66598f"></div><div style="left:841px;top:651px;width:7px;height:8px;background:#6b9a3e"></div><div style="left:841px;top:659px;width:7px;height:3px;background:#111"></div><div style="left:841px;top:662px;width:7px;height:8px;background:#6b9a3e"></div><div class="mf" style="left:835px;top:698px;width:14px;height:14px;"><svg viewBox="0 0 14 14" style="left:-1px;top:-1px;width:14px;height:14px"><use href="#i-plus"/></svg></div><div class="lbl" style="left:717px;top:698px;width:118px;height:14px;"><span>VUMETER</span></div></div>
<div class="comp dimmed" style="left:0;top:0;width:0;height:0"><div class="cs" style="left:717px;top:733px;width:132px;height:8px;"></div><div class="cs" style="left:717px;top:837px;width:132px;height:8px;"></div><div class="rs" style="left:717px;top:741px;width:9px;height:96px;"></div><div style="left:718px;top:773px;width:7px;height:32px;background:#3a4870"></div><div class="fc" style="left:726px;top:741px;width:18px;height:96px;background:#6d6d6d"></div><div class="fl" style="left:726px;top:742px;width:17px;height:17px;"><svg viewBox="0 0 14 14" preserveAspectRatio="xMidYMid meet" style="color:#a2a2a2"><use href="#i-ring"/></svg></div><div class="fl" style="left:726px;top:761px;width:17px;height:17px;"><svg viewBox="0 0 14 14" preserveAspectRatio="xMidYMid meet" style="color:#a2a2a2"><use href="#i-bolt"/></svg></div><div class="fl" style="left:726px;top:779px;width:17px;height:18px;"><svg viewBox="0 0 14 14" preserveAspectRatio="xMidYMid meet" style="color:#a2a2a2"><use href="#i-x"/></svg></div><div class="fl" style="left:726px;top:798px;width:17px;height:17px;"><svg viewBox="0 0 14 14" preserveAspectRatio="xMidYMid meet" style="color:#a2a2a2"><use href="#i-lock"/></svg></div><div class="fl" style="left:726px;top:817px;width:17px;height:19px;"></div><div class="fr" style="left:743px;top:741px;width:97px;height:96px;"></div><div class="vw nt" style="left:749px;top:746px;width:87px;height:86px;font-size:26.3px;line-height:26.3px"><span style="left:0;width:87px;top:31.8px">Bas</span></div><div class="rs" style="left:840px;top:741px;width:9px;height:96px;"></div><div style="left:841px;top:761px;width:7px;height:7px;background:#36521f"></div><div style="left:841px;top:773px;width:7px;height:7px;background:#36521f"></div><div style="left:841px;top:780px;width:7px;height:19px;background:#36304e"></div><div style="left:841px;top:799px;width:7px;height:8px;background:#36521f"></div><div style="left:841px;top:807px;width:7px;height:3px;background:#111"></div><div style="left:841px;top:810px;width:7px;height:8px;background:#36521f"></div><div class="mf" style="left:835px;top:846px;width:14px;height:14px;"><svg viewBox="0 0 14 14" style="left:-1px;top:-1px;width:14px;height:14px"><use href="#i-plus"/></svg></div><div class="lbl" style="left:717px;top:846px;width:118px;height:14px;"><span>VUMETER1</span></div></div>
<div class="top " style="left:0;top:0;width:0;height:0"><div class="ic" style="left:701px;top:333px;width:9px;height:53px;"></div><div class="fl" style="left:709px;top:333px;width:13px;height:14px;"><svg viewBox="0 0 14 14" preserveAspectRatio="xMidYMid meet" style="color:#cdc9d9"><use href="#i-ring"/></svg></div><div class="fl" style="left:709px;top:346px;width:13px;height:14px;"><svg viewBox="0 0 14 14" preserveAspectRatio="xMidYMid meet" style="color:#cdc9d9"><use href="#i-bolt"/></svg></div><div class="fl" style="left:709px;top:359px;width:13px;height:14px;"><svg viewBox="0 0 14 14" preserveAspectRatio="xMidYMid meet" style="color:#cdc9d9"><use href="#i-arrow"/></svg></div><div class="fl" style="left:709px;top:372px;width:13px;height:14px;"><svg viewBox="0 0 14 14" preserveAspectRatio="xMidYMid meet" style="color:#cdc9d9"><use href="#i-lock"/></svg></div><div class="fr" style="left:722px;top:333px;width:77px;height:53px;"></div><div class="vw nt" style="left:727px;top:338px;width:68px;height:43px;font-size:20px;line-height:20px"><span style="left:0;width:68px;top:13.1px">Ren</span></div><div class="rs" style="left:799px;top:333px;width:9px;height:53px;"></div><div class="oc" style="left:800px;top:352px;width:7px;height:7px;"></div><div class="oc" style="left:800px;top:363px;width:7px;height:6px;"></div><div class="mf" style="left:780px;top:387px;width:15px;height:14px;"><i style="background:radial-gradient(circle,#353b6e 58%,transparent 80%)"></i></div><div class="mf" style="left:794px;top:387px;width:14px;height:14px;"><svg viewBox="0 0 14 14" style="left:-1px;top:-1px;width:14px;height:14px"><use href="#i-plus"/></svg></div><div class="lbl" style="left:701px;top:387px;width:79px;height:14px;"><span>render1</span></div><svg viewBox="0 0 22 19" preserveAspectRatio="none" style="left:776.2px;top:323.9px;width:20.4px;height:18.0px"><path d="M11 1.8 L20.2 17 H1.8 Z" fill="#f2dc3a" stroke="#0c0c0c" stroke-width="2.4" stroke-linejoin="round"/><path d="M11 6 V12" stroke="#111" stroke-width="2.4"/><circle cx="11" cy="14.6" r="1.3" fill="#111"/></svg></div>
<div class="top " style="left:0;top:0;width:0;height:0"><div class="ic" style="left:799px;top:218px;width:9px;height:26px;"></div><div class="on" style="left:799px;top:244px;width:9px;height:4px;"></div><div class="ic" style="left:799px;top:248px;width:9px;height:23px;"></div><div class="fl" style="left:807px;top:218px;width:13px;height:14px;"><svg viewBox="0 0 14 14" preserveAspectRatio="xMidYMid meet" style="color:#cdc9d9"><use href="#i-ring"/></svg></div><div class="fl" style="left:807px;top:231px;width:13px;height:14px;"><svg viewBox="0 0 14 14" preserveAspectRatio="xMidYMid meet" style="color:#cdc9d9"><use href="#i-bolt"/></svg></div><div class="fl" style="left:807px;top:244px;width:13px;height:14px;"><svg viewBox="0 0 14 14" preserveAspectRatio="xMidYMid meet" style="color:#cdc9d9"><use href="#i-arrow"/></svg></div><div class="fl" style="left:807px;top:257px;width:13px;height:14px;"><svg viewBox="0 0 14 14" preserveAspectRatio="xMidYMid meet" style="color:#cdc9d9"><use href="#i-lock"/></svg></div><div class="fr" style="left:820px;top:218px;width:77px;height:53px;"></div><div class="vw nt" style="left:825px;top:223px;width:68px;height:43px;font-size:20px;line-height:20px"><span style="left:0;width:68px;top:13.1px">Blr</span></div><div class="rs" style="left:897px;top:218px;width:9px;height:53px;"></div><div class="oc" style="left:898px;top:237px;width:7px;height:6px;"></div><div class="oc" style="left:898px;top:248px;width:7px;height:6px;"></div><div class="mf" style="left:878px;top:272px;width:15px;height:14px;"><i style="background:radial-gradient(circle,#353b6e 58%,transparent 80%)"></i></div><div class="mf" style="left:892px;top:272px;width:14px;height:14px;"><svg viewBox="0 0 14 14" style="left:-1px;top:-1px;width:14px;height:14px"><use href="#i-plus"/></svg></div><div class="lbl" style="left:799px;top:272px;width:79px;height:14px;"><span>blur2</span></div></div>
<div class="top " style="left:0;top:0;width:0;height:0"><div class="ic" style="left:881px;top:300px;width:9px;height:26px;"></div><div class="on" style="left:881px;top:326px;width:9px;height:4px;"></div><div class="ic" style="left:881px;top:330px;width:9px;height:23px;"></div><div class="fl" style="left:889px;top:300px;width:13px;height:14px;"><svg viewBox="0 0 14 14" preserveAspectRatio="xMidYMid meet" style="color:#cdc9d9"><use href="#i-ring"/></svg></div><div class="fl" style="left:889px;top:313px;width:13px;height:14px;"><svg viewBox="0 0 14 14" preserveAspectRatio="xMidYMid meet" style="color:#cdc9d9"><use href="#i-bolt"/></svg></div><div class="fl" style="left:889px;top:326px;width:13px;height:14px;"><svg viewBox="0 0 14 14" preserveAspectRatio="xMidYMid meet" style="color:#cdc9d9"><use href="#i-arrow"/></svg></div><div class="fl" style="left:889px;top:339px;width:13px;height:14px;"><svg viewBox="0 0 14 14" preserveAspectRatio="xMidYMid meet" style="color:#cdc9d9"><use href="#i-lock"/></svg></div><div class="fr" style="left:902px;top:300px;width:77px;height:53px;"></div><div class="vw nt" style="left:907px;top:305px;width:68px;height:43px;font-size:20px;line-height:20px"><span style="left:0;width:68px;top:13.1px">Nul</span></div><div class="rs" style="left:979px;top:300px;width:9px;height:53px;"></div><div class="oc" style="left:980px;top:319px;width:7px;height:6px;"></div><div class="oc" style="left:980px;top:330px;width:7px;height:6px;"></div><div class="mf" style="left:960px;top:354px;width:15px;height:14px;"><i style="background:radial-gradient(circle,#353b6e 58%,transparent 80%)"></i></div><div class="mf" style="left:974px;top:354px;width:14px;height:14px;"><svg viewBox="0 0 14 14" style="left:-1px;top:-1px;width:14px;height:14px"><use href="#i-plus"/></svg></div><div class="lbl" style="left:881px;top:354px;width:79px;height:14px;"><span>null2</span></div></div>
<div class="top " style="left:0;top:0;width:0;height:0"><div class="ic" style="left:881px;top:406px;width:9px;height:20px;"></div><div class="on" style="left:881px;top:426px;width:9px;height:5px;"></div><div class="ic" style="left:881px;top:431px;width:9px;height:20px;"></div><div class="fl" style="left:889px;top:406px;width:11px;height:12px;"><svg viewBox="0 0 14 14" preserveAspectRatio="xMidYMid meet" style="color:#cdc9d9"><use href="#i-ring2"/></svg></div><div class="fl" style="left:889px;top:417px;width:11px;height:11px;"><svg viewBox="0 0 14 14" preserveAspectRatio="xMidYMid meet" style="color:#cdc9d9"><use href="#i-bolt"/></svg></div><div class="fl" style="left:889px;top:427px;width:11px;height:12px;"><svg viewBox="0 0 14 14" preserveAspectRatio="xMidYMid meet" style="color:#cdc9d9"><use href="#i-arrow"/></svg></div><div class="fl" style="left:889px;top:438px;width:11px;height:11px;"><svg viewBox="0 0 14 14" preserveAspectRatio="xMidYMid meet" style="color:#cdc9d9"><use href="#i-lock"/></svg></div><div class="fl" style="left:889px;top:448px;width:11px;height:3px;"></div><div class="fr" style="left:900px;top:406px;width:81px;height:45px;"></div><div class="vw" style="left:905px;top:411px;width:72px;height:35px;"><svg viewBox="0 0 72 35" style="left:0;top:0;width:72px;height:35px"><rect x="4.5" y="0" width="61.5" height="35" fill="url(#chk)"/><path d="M13 16.5 L42 10" stroke="#f0f0f0" stroke-width="1"/></svg></div><div class="rs" style="left:981px;top:406px;width:9px;height:45px;"></div><div class="oc" style="left:982px;top:421px;width:7px;height:5px;"></div><div class="oc" style="left:982px;top:431px;width:7px;height:5px;"></div><div class="mf" style="left:962px;top:452px;width:15px;height:14px;"><i style="background:radial-gradient(circle,#353b6e 58%,transparent 80%)"></i></div><div class="mf" style="left:976px;top:452px;width:14px;height:14px;"><svg viewBox="0 0 14 14" style="left:-1px;top:-1px;width:14px;height:14px"><use href="#i-plus"/></svg></div><div class="lbl" style="left:881px;top:452px;width:81px;height:14px;"><span>feedback1</span></div><svg viewBox="0 0 22 19" preserveAspectRatio="none" style="left:963.0px;top:398.3px;width:17.3px;height:15.3px"><path d="M11 1.8 L20.2 17 H1.8 Z" fill="#f2dc3a" stroke="#0c0c0c" stroke-width="2.4" stroke-linejoin="round"/><path d="M11 6 V12" stroke="#111" stroke-width="2.4"/><circle cx="11" cy="14.6" r="1.3" fill="#111"/></svg></div>
<div class="top " style="left:0;top:0;width:0;height:0"><div class="ic" style="left:996px;top:406px;width:9px;height:20px;"></div><div class="on" style="left:996px;top:426px;width:9px;height:5px;"></div><div class="ic" style="left:996px;top:431px;width:9px;height:20px;"></div><div class="fl" style="left:1004px;top:406px;width:11px;height:12px;"><svg viewBox="0 0 14 14" preserveAspectRatio="xMidYMid meet" style="color:#cdc9d9"><use href="#i-ring2"/></svg></div><div class="fl" style="left:1004px;top:417px;width:11px;height:11px;"><svg viewBox="0 0 14 14" preserveAspectRatio="xMidYMid meet" style="color:#cdc9d9"><use href="#i-bolt"/></svg></div><div class="fl" style="left:1004px;top:427px;width:11px;height:12px;"><svg viewBox="0 0 14 14" preserveAspectRatio="xMidYMid meet" style="color:#cdc9d9"><use href="#i-arrow"/></svg></div><div class="fl" style="left:1004px;top:438px;width:11px;height:11px;"><svg viewBox="0 0 14 14" preserveAspectRatio="xMidYMid meet" style="color:#cdc9d9"><use href="#i-lock"/></svg></div><div class="fl" style="left:1004px;top:448px;width:11px;height:3px;"></div><div class="fr" style="left:1015px;top:406px;width:81px;height:45px;"></div><div class="vw" style="left:1020px;top:411px;width:72px;height:35px;"><svg viewBox="0 0 72 35" style="left:0;top:0;width:72px;height:35px"><rect x="4.5" y="0" width="61.5" height="35" fill="url(#chk)"/><path d="M13 16.5 L42 10" stroke="#f0f0f0" stroke-width="1"/></svg></div><div class="rs" style="left:1096px;top:406px;width:9px;height:45px;"></div><div class="oc" style="left:1097px;top:421px;width:7px;height:5px;"></div><div class="oc" style="left:1097px;top:431px;width:7px;height:5px;"></div><div class="mf" style="left:1077px;top:452px;width:15px;height:14px;"><i style="background:radial-gradient(circle,#353b6e 58%,transparent 80%)"></i></div><div class="mf" style="left:1091px;top:452px;width:14px;height:14px;"><svg viewBox="0 0 14 14" style="left:-1px;top:-1px;width:14px;height:14px"><use href="#i-plus"/></svg></div><div class="lbl" style="left:996px;top:452px;width:81px;height:14px;"><span>level1</span></div></div>
<div class="top " style="left:0;top:0;width:0;height:0"><div class="ic" style="left:1103px;top:407px;width:9px;height:26px;"></div><div class="on" style="left:1103px;top:433px;width:9px;height:4px;"></div><div class="ic" style="left:1103px;top:437px;width:9px;height:23px;"></div><div class="fl" style="left:1111px;top:407px;width:13px;height:14px;"><svg viewBox="0 0 14 14" preserveAspectRatio="xMidYMid meet" style="color:#cdc9d9"><use href="#i-ring"/></svg></div><div class="fl" style="left:1111px;top:420px;width:13px;height:14px;"><svg viewBox="0 0 14 14" preserveAspectRatio="xMidYMid meet" style="color:#cdc9d9"><use href="#i-bolt"/></svg></div><div class="fl" style="left:1111px;top:433px;width:13px;height:14px;"><svg viewBox="0 0 14 14" preserveAspectRatio="xMidYMid meet" style="color:#cdc9d9"><use href="#i-arrow"/></svg></div><div class="fl" style="left:1111px;top:446px;width:13px;height:14px;"><svg viewBox="0 0 14 14" preserveAspectRatio="xMidYMid meet" style="color:#cdc9d9"><use href="#i-lock"/></svg></div><div class="fr" style="left:1124px;top:407px;width:93px;height:53px;"></div><div class="vw nt" style="left:1129px;top:412px;width:84px;height:43px;font-size:25.8px;line-height:25.8px"><span style="left:0;width:84px;top:11.2px">Blr</span></div><div class="rs" style="left:1217px;top:407px;width:9px;height:53px;"></div><div class="oc" style="left:1218px;top:426px;width:7px;height:6px;"></div><div class="oc" style="left:1218px;top:437px;width:7px;height:6px;"></div><div class="mf" style="left:1198px;top:461px;width:15px;height:14px;"><i style="background:radial-gradient(circle,#353b6e 58%,transparent 80%)"></i></div><div class="mf" style="left:1212px;top:461px;width:14px;height:14px;"><svg viewBox="0 0 14 14" style="left:-1px;top:-1px;width:14px;height:14px"><use href="#i-plus"/></svg></div><div class="lbl" style="left:1103px;top:461px;width:95px;height:14px;"><span>blur1</span></div></div>
<div class="top " style="left:0;top:0;width:0;height:0"><div class="ic" style="left:1226px;top:335px;width:9px;height:25px;"></div><div class="on" style="left:1226px;top:360px;width:9px;height:11px;"></div><div class="ic" style="left:1226px;top:371px;width:9px;height:23px;"></div><div class="fl" style="left:1234px;top:335px;width:14px;height:15px;"><svg viewBox="0 0 14 14" preserveAspectRatio="xMidYMid meet" style="color:#cdc9d9"><use href="#i-ring"/></svg></div><div class="fl" style="left:1234px;top:349px;width:14px;height:14px;"><svg viewBox="0 0 14 14" preserveAspectRatio="xMidYMid meet" style="color:#cdc9d9"><use href="#i-bolt"/></svg></div><div class="fl" style="left:1234px;top:362px;width:14px;height:15px;"><svg viewBox="0 0 14 14" preserveAspectRatio="xMidYMid meet" style="color:#cdc9d9"><use href="#i-arrow"/></svg></div><div class="fl" style="left:1234px;top:376px;width:14px;height:14px;"><svg viewBox="0 0 14 14" preserveAspectRatio="xMidYMid meet" style="color:#cdc9d9"><use href="#i-lock"/></svg></div><div class="fl" style="left:1234px;top:389px;width:14px;height:5px;"></div><div class="fr" style="left:1248px;top:335px;width:76px;height:59px;"></div><div class="vw nt" style="left:1253px;top:340px;width:67px;height:49px;font-size:20px;line-height:20px"><span style="left:0;width:67px;top:15.1px">Cmp</span></div><div class="rs" style="left:1324px;top:335px;width:9px;height:59px;"></div><div class="oc" style="left:1325px;top:356px;width:7px;height:7px;"></div><div class="oc" style="left:1325px;top:368px;width:7px;height:7px;"></div><div class="mf" style="left:1305px;top:395px;width:15px;height:14px;"><i style="background:radial-gradient(circle,#353b6e 58%,transparent 80%)"></i></div><div class="mf" style="left:1319px;top:395px;width:14px;height:14px;"><svg viewBox="0 0 14 14" style="left:-1px;top:-1px;width:14px;height:14px"><use href="#i-plus"/></svg></div><div class="lbl" style="left:1226px;top:395px;width:79px;height:14px;"><span>comp2</span></div></div>
<div class="top " style="left:0;top:0;width:0;height:0"><div class="ic" style="left:1341px;top:350px;width:9px;height:20px;"></div><div class="on" style="left:1341px;top:370px;width:9px;height:5px;"></div><div class="ic" style="left:1341px;top:375px;width:9px;height:19px;"></div><div class="fl" style="left:1349px;top:350px;width:10px;height:11px;"><svg viewBox="0 0 14 14" preserveAspectRatio="xMidYMid meet" style="color:#cdc9d9"><use href="#i-ring2"/></svg></div><div class="fl" style="left:1349px;top:360px;width:10px;height:11px;"><svg viewBox="0 0 14 14" preserveAspectRatio="xMidYMid meet" style="color:#cdc9d9"><use href="#i-bolt"/></svg></div><div class="fl" style="left:1349px;top:370px;width:10px;height:10px;"><svg viewBox="0 0 14 14" preserveAspectRatio="xMidYMid meet" style="color:#cdc9d9"><use href="#i-arrow"/></svg></div><div class="fl" style="left:1349px;top:379px;width:10px;height:11px;"><svg viewBox="0 0 14 14" preserveAspectRatio="xMidYMid meet" style="color:#cdc9d9"><use href="#i-lock"/></svg></div><div class="fl" style="left:1349px;top:389px;width:10px;height:5px;"></div><div class="fr" style="left:1359px;top:350px;width:80px;height:44px;"></div><div class="vw" style="left:1364px;top:355px;width:71px;height:34px;"><svg viewBox="0 0 71 34" style="left:0;top:0;width:71px;height:34px"><rect x="4.5" y="0" width="60.5" height="34" fill="url(#chk)"/><path d="M14 16.5 L43 10.5" stroke="#f0f0f0" stroke-width="1"/></svg></div><div class="rs" style="left:1439px;top:350px;width:9px;height:44px;"></div><div class="oc" style="left:1440px;top:366px;width:7px;height:4px;"></div><div class="oc" style="left:1440px;top:375px;width:7px;height:5px;"></div><div class="mf" style="left:1420px;top:395px;width:15px;height:14px;"><i style="background:radial-gradient(circle,#353b6e 58%,transparent 80%)"></i></div><div class="mf" style="left:1434px;top:395px;width:14px;height:14px;"><svg viewBox="0 0 14 14" style="left:-1px;top:-1px;width:14px;height:14px"><use href="#i-plus"/></svg></div><div class="lbl" style="left:1341px;top:395px;width:79px;height:14px;"><span>null1</span></div></div>
<div class="top " style="left:0;top:0;width:0;height:0"><div class="ic" style="left:1382px;top:473px;width:9px;height:17px;"></div><div class="on" style="left:1382px;top:490px;width:9px;height:10px;"></div><div class="ic" style="left:1382px;top:500px;width:9px;height:17px;"></div><div class="fl" style="left:1390px;top:473px;width:10px;height:11px;"><svg viewBox="0 0 14 14" preserveAspectRatio="xMidYMid meet" style="color:#cdc9d9"><use href="#i-ring2"/></svg></div><div class="fl" style="left:1390px;top:483px;width:10px;height:11px;"><svg viewBox="0 0 14 14" preserveAspectRatio="xMidYMid meet" style="color:#cdc9d9"><use href="#i-bolt"/></svg></div><div class="fl" style="left:1390px;top:493px;width:10px;height:10px;"><svg viewBox="0 0 14 14" preserveAspectRatio="xMidYMid meet" style="color:#cdc9d9"><use href="#i-arrow"/></svg></div><div class="fl" style="left:1390px;top:502px;width:10px;height:11px;"><svg viewBox="0 0 14 14" preserveAspectRatio="xMidYMid meet" style="color:#cdc9d9"><use href="#i-lock"/></svg></div><div class="fl" style="left:1390px;top:512px;width:10px;height:5px;"></div><div class="fr" style="left:1400px;top:473px;width:80px;height:44px;"></div><div class="vw" style="left:1405px;top:478px;width:71px;height:34px;"><svg viewBox="0 0 71 34" style="left:0;top:0;width:71px;height:34px"><rect x="4.5" y="0" width="60.5" height="34" fill="url(#chk)"/><path d="M14 16.5 L43 10.5" stroke="#f0f0f0" stroke-width="1"/></svg></div><div class="rs" style="left:1480px;top:473px;width:9px;height:44px;"></div><div class="oc" style="left:1481px;top:489px;width:7px;height:4px;"></div><div class="oc" style="left:1481px;top:498px;width:7px;height:5px;"></div><div style="left:1481px;top:494px;width:8px;height:3px;background:#0c0c0e"></div><div class="mf" style="left:1461px;top:518px;width:15px;height:14px;"><i style="background:radial-gradient(circle,#353b6e 58%,transparent 80%)"></i></div><div class="mf" style="left:1475px;top:518px;width:14px;height:14px;"><svg viewBox="0 0 14 14" style="left:-1px;top:-1px;width:14px;height:14px"><use href="#i-plus"/></svg></div><div class="lbl" style="left:1382px;top:518px;width:79px;height:14px;"><span>comp1</span></div></div>
<div class="chop " style="left:0;top:0;width:0;height:0"><div class="ic" style="left:988px;top:663px;width:9px;height:25px;"></div><div class="on" style="left:988px;top:688px;width:9px;height:12px;"></div><div class="ic" style="left:988px;top:700px;width:9px;height:22px;"></div><div class="fl" style="left:996px;top:663px;width:14px;height:15px;"><svg viewBox="0 0 14 14" preserveAspectRatio="xMidYMid meet" style="color:#cdc9d9"><use href="#i-ring2"/></svg></div><div class="fl" style="left:996px;top:677px;width:14px;height:14px;"><svg viewBox="0 0 14 14" preserveAspectRatio="xMidYMid meet" style="color:#cdc9d9"><use href="#i-bolt"/></svg></div><div class="fl" style="left:996px;top:690px;width:14px;height:15px;"><svg viewBox="0 0 14 14" preserveAspectRatio="xMidYMid meet" style="color:#cdc9d9"><use href="#i-arrow"/></svg></div><div class="fl" style="left:996px;top:704px;width:14px;height:14px;"><svg viewBox="0 0 14 14" preserveAspectRatio="xMidYMid meet" style="color:#cdc9d9"><use href="#i-lock"/></svg></div><div class="fl" style="left:996px;top:717px;width:14px;height:5px;"></div><div class="fr" style="left:1010px;top:663px;width:76px;height:59px;"></div><div style="left:1015px;top:668px;width:67px;height:49px;background:#777"><svg viewBox="0 0 66 50" style="left:0;top:0;width:66px;height:50px"><path d="M16.5 2 V50 M33.5 2 V50 M50.5 2 V50" stroke="#a0a0a0" stroke-width="1" stroke-dasharray="1 1.5"/></svg><span class="t" style="left:25px;top:26px;font-family:'DejaVu Sans Mono','Liberation Mono',monospace;font-size:9px;color:#111;transform:scaleX(.9);transform-origin:0 0">0 level</span></div><div class="rs" style="left:1086px;top:663px;width:9px;height:59px;"></div><div class="oc" style="left:1087px;top:684px;width:7px;height:7px;"></div><div class="oc" style="left:1087px;top:696px;width:7px;height:7px;"></div><div style="left:1087px;top:692px;width:8px;height:3px;background:#0c0c0e"></div><div class="mf" style="left:1053px;top:723px;width:15px;height:14px;"><i style="background:radial-gradient(circle,#466c26 58%,transparent 80%)"></i></div><div class="mf" style="left:1067px;top:723px;width:15px;height:14px;"><i style="background:radial-gradient(circle,#353b6e 58%,transparent 80%)"></i></div><div class="mf" style="left:1081px;top:723px;width:14px;height:14px;"><svg viewBox="0 0 14 14" style="left:-1px;top:-1px;width:14px;height:14px"><use href="#i-plus"/></svg></div><div class="lbl" style="left:988px;top:723px;width:65px;height:14px;"><span>math1</span></div></div>
<div class="dat " style="left:0;top:0;width:0;height:0"><div class="ic" style="left:1111px;top:663px;width:9px;height:28px;"></div><div class="ic" style="left:1111px;top:695px;width:9px;height:27px;"></div><div class="fl" style="left:1119px;top:663px;width:14px;height:15px;"><svg viewBox="0 0 14 14" preserveAspectRatio="xMidYMid meet" style="color:#cdc9d9"><use href="#i-ring2"/></svg></div><div class="fl" style="left:1119px;top:677px;width:14px;height:14px;"><svg viewBox="0 0 14 14" preserveAspectRatio="xMidYMid meet" style="color:#cdc9d9"><use href="#i-bolt"/></svg></div><div class="fl" style="left:1119px;top:690px;width:14px;height:15px;"><svg viewBox="0 0 14 14" preserveAspectRatio="xMidYMid meet" style="color:#cdc9d9"><use href="#i-arrow"/></svg></div><div class="fl" style="left:1119px;top:704px;width:14px;height:14px;"><svg viewBox="0 0 14 14" preserveAspectRatio="xMidYMid meet" style="color:#cdc9d9"><use href="#i-lock"/></svg></div><div class="fl" style="left:1119px;top:717px;width:14px;height:5px;"></div><div class="fr" style="left:1133px;top:663px;width:76px;height:59px;"></div><div class="vw" style="left:1138px;top:668px;width:67px;height:49px;overflow:hidden"><div style="left:0;top:0;width:20px;height:49px;background-color:#2a2c2e;background-image:radial-gradient(#3c3e40 0.6px,transparent 0.8px);background-size:2px 2px"></div><div style="left:9px;top:7px;font-family:'DejaVu Sans Mono','Liberation Mono',monospace;font-size:10.5px;color:#d2d2d2;line-height:15px;white-space:pre">1
2
3</div><div style="left:26px;top:7px;font-family:'DejaVu Sans Mono','Liberation Mono',monospace;font-size:10.5px;color:#d2d2d2;line-height:15px;white-space:pre"># me -
#
# chan</div><div style="left:66px;top:0;width:1px;height:49px;border-left:1px dashed #eee"></div></div><div class="rs" style="left:1209px;top:663px;width:9px;height:59px;"></div><div class="oc" style="left:1210px;top:684px;width:7px;height:7px;"></div><div class="oc" style="left:1210px;top:696px;width:7px;height:7px;"></div><div style="left:1210px;top:692px;width:8px;height:3px;background:#0c0c0e"></div><div class="mf" style="left:1190px;top:723px;width:15px;height:14px;"><i style="background:radial-gradient(circle,#466c26 58%,transparent 80%)"></i></div><div class="mf" style="left:1204px;top:723px;width:14px;height:14px;"><svg viewBox="0 0 14 14" style="left:-1px;top:-1px;width:14px;height:14px"><use href="#i-plus"/></svg></div><div class="lbl" style="left:1111px;top:723px;width:79px;height:14px;"><span>chopexec1</span></div></div>
<svg width="1920" height="1035" viewBox="0 0 1920 1035" style="left:0;top:0;pointer-events:none"><use href="#gridg" opacity=".14"/><use href="#wiresg" opacity=".2"/></svg>
</div>
<div style="left:0px;top:0px;width:1920px;height:73px;background:#35363a"></div>
<div style="left:0px;top:49px;width:1920px;height:23px;background:#3f4149"></div>
<div style="left:0px;top:0px;width:1920px;height:1px;background:#5a5a5c"></div>
<div style="left:0px;top:24px;width:1920px;height:1px;background:#58585a"></div>
<div style="left:0px;top:48px;width:1920px;height:1px;background:#58585a"></div>
<div style="left:0px;top:72px;width:1920px;height:1px;background:#6c6c6e"></div>
<div class="btn ctr" style="left:3px;top:4px;width:100px;height:18px;"><span class="t" style="position:static;font-size:10.1px;color:#b9bbcb;word-spacing:1px">[ WIKI ]</span></div>
<div class="btn ctr" style="left:105px;top:4px;width:100px;height:18px;"><span class="t" style="position:static;font-size:10.1px;color:#b9bbcb;word-spacing:1px">[ FORUM ]</span></div>
<div class="btn ctr" style="left:207px;top:4px;width:100px;height:18px;"><span class="t" style="position:static;font-size:10.1px;color:#b9bbcb;word-spacing:1px">[ TUTORIALS ]</span></div>
<div class="btn ctr" style="left:309px;top:4px;width:30px;height:18px;"><div class="ctr" style="left:1px;top:1px;width:26px;height:14px;background:#dfa050"><span class="t" style="position:static;font-size:11px;color:#6a1a10;">O|I</span></div></div>
<div class="btn ctr" style="left:341px;top:4px;width:30px;height:18px;"><span class="t" style="position:static;font-size:10.1px;color:#6c6e78;">60</span></div>
<div class="btn ctr" style="left:373px;top:4px;width:86px;height:18px;justify-content:flex-start"><span class="t" style="left:3px;top:2px;font-size:10.1px;color:#c6c8d8;word-spacing:2px">FPS:&nbsp; 26</span></div>
<div style="left:464px;top:7px;width:11px;height:11px;border:1px solid #b4b4b4;background:#2e2f33"></div>
<span class="t" style="left:482px;top:8px;font-size:10.1px;color:#c6c8d8">Realtime</span>
<div style="left:543px;top:4px;width:1273px;height:18px;background:#545862;border:1px solid #74767e"><span class="t" style="left:3px;top:2px;font-size:10.1px;color:#c8cad8;word-spacing:.8px">11:34:20 Load Project .toe: Workshop.42.toe loaded successfully.</span></div>
<div class="btn" style="left:1817px;top:4px;width:101px;height:18px;"></div>
<div class="btn ctr" style="left:3px;top:28px;width:20px;height:18px;"><svg viewBox="0 0 20 18" style="left:-1px;top:-1px;width:20px;height:18px"><rect x="4.5" y="4.5" width="11" height="9" fill="none" stroke="#b8bacb" stroke-width="1"/><path d="M6.5 11 L10 8 L13.5 11" fill="none" stroke="#b8bacb" stroke-width="1"/></svg></div>
<div class="btn ctr" style="left:25px;top:28px;width:20px;height:18px;"><svg viewBox="0 0 20 18" style="left:-1px;top:-1px;width:20px;height:18px"><path d="M10 3 L13 6.5 H11 V10 H9 V6.5 H7 Z" fill="#c4c6d6"/><path d="M4 10.1 L7.5 9 V11 H12.5 V9 L16 10.1 L10 13.6 Z" fill="#b4b6c6"/></svg></div>
<div style="left:56px;top:30px;width:1px;height:14px;background:#8a8c98"></div>
<span class="t" style="left:72px;top:32px;font-size:10.1px;color:#c6c8d8">Pane Layout</span>
<div class="btn" style="left:151px;top:27px;width:23px;height:19px;"><svg viewBox="0 0 22 18" style="left:0;top:0;width:21px;height:17px"><path d="" stroke="#666" stroke-width="1" fill="none"/></svg></div>
<div class="btn" style="left:176px;top:27px;width:23px;height:19px;"><svg viewBox="0 0 22 18" style="left:0;top:0;width:21px;height:17px"><path d="M11 0V18" stroke="#666" stroke-width="1" fill="none"/></svg></div>
<div class="btn" style="left:201px;top:27px;width:23px;height:19px;"><svg viewBox="0 0 22 18" style="left:0;top:0;width:21px;height:17px"><path d="M0 9H22" stroke="#666" stroke-width="1" fill="none"/></svg></div>
<div class="btn" style="left:226px;top:27px;width:23px;height:19px;"><svg viewBox="0 0 22 18" style="left:0;top:0;width:21px;height:17px"><path d="M10 0V18M10 9H22" stroke="#666" stroke-width="1" fill="none"/></svg></div>
<div class="btn" style="left:251px;top:27px;width:23px;height:19px;"><svg viewBox="0 0 22 18" style="left:0;top:0;width:21px;height:17px"><path d="M11 0V18M0 9H22" stroke="#666" stroke-width="1" fill="none"/></svg></div>
<div style="left:285px;top:30px;width:1px;height:14px;background:#8a8c98"></div>
<span class="t" style="left:305px;top:32px;font-size:10.1px;color:#c6c8d8">New Layout</span>
<div class="btn ctr" style="left:378px;top:28px;width:20px;height:18px;"><svg viewBox="0 0 18 16" style="left:0;top:0;width:18px;height:16px"><path d="M9 3.5V12.5M4.5 8H13.5" stroke="#c8cadb" stroke-width="1.2"/></svg></div>
<div class="btn" style="left:2px;top:50px;width:21px;height:21px;"><svg viewBox="0 0 21 20" style="left:0;top:0;width:20px;height:19px"><path d="M6 8 H15 L10.1 12.6 Z" fill="#c8cadb"/></svg></div>
<div class="btn" style="left:25px;top:50px;width:21px;height:21px;"><svg viewBox="0 0 21 20" style="left:0;top:0;width:20px;height:19px"><rect x="7" y="6" width="8" height="8" fill="#c0c6e0"/></svg></div>
<div class="btn" style="left:48px;top:50px;width:21px;height:21px;"><svg viewBox="0 0 21 20" style="left:0;top:0;width:20px;height:19px"><path d="M5.5 10 L9.5 6.5 V8.5 H15 V11.5 H9.5 V13.5 Z" fill="none" stroke="#6c6e78" stroke-width="1"/></svg></div>
<div class="btn" style="left:71px;top:50px;width:21px;height:21px;"><svg viewBox="0 0 21 20" style="left:0;top:0;width:20px;height:19px"><path d="M15.5 10 L11.5 6.5 V8.5 H6 V11.5 H11.5 V13.5 Z" fill="none" stroke="#6c6e78" stroke-width="1"/></svg></div>
<div class="btn" style="left:94px;top:50px;width:21px;height:21px;"><svg viewBox="0 0 21 20" style="left:0;top:0;width:20px;height:19px"><path d="M10.1 5.5V14.5M6 10H15" stroke="#d0d2e2" stroke-width="1.4"/></svg></div>
<div class="btn" style="left:117px;top:50px;width:21px;height:21px;"><svg viewBox="0 0 21 20" style="left:0;top:0;width:20px;height:19px"><path d="M10.1 3.6 L12.1 8.3 L17 8.4 L13.1 11.4 L14.5 16.1 L10.1 13.3 L6.5 16.1 L7.9 11.4 L4 8.4 L8.9 8.3 Z" fill="#c8cadb"/></svg></div>
<div class="btn" style="left:140px;top:50px;width:21px;height:21px;"><svg viewBox="0 0 21 20" style="left:0;top:0;width:20px;height:19px"><path d="M5.5 10.1 L10.1 6.5 L15.5 10.1 M7 10 V14 H14 V10" fill="none" stroke="#9a9cac" stroke-width="1"/><rect x="10.1" y="10.1" width="2.5" height="2" fill="#c8cadb"/></svg></div>
<span class="t" style="left:166px;top:56px;font-size:10.1px;color:#c6c8d8;word-spacing:1px">/ project1 / &gt;&gt;</span>
<div class="btn ctr" style="left:1851px;top:50px;width:21px;height:21px;"><span class="t" style="position:static;font-size:10.1px;color:#c6c8d8;margin-top:3px">0</span></div>
<div class="btn" style="left:1874px;top:50px;width:21px;height:21px;"><svg viewBox="0 0 21 21" style="left:-1px;top:-1px;width:21px;height:21px"><rect x="5.5" y="7" width="10" height="8" fill="none" stroke="#c8cadb" stroke-width="1"/><path d="M5 7.5H16" stroke="#c8cadb" stroke-width="2"/></svg></div>
<div class="btn" style="left:1897px;top:50px;width:21px;height:21px;"><svg viewBox="0 0 21 21" style="left:-1px;top:-1px;width:21px;height:21px"><path d="M9 5.5 H12 V10 H14 L10.1 14.5 L7 10 H9 Z" fill="none" stroke="#b8bacb" stroke-width="1"/></svg></div>
<div style="left:1490px;top:73px;width:430px;height:510px;background:#4a4a4a"></div>
<div style="left:1490px;top:73px;width:430px;height:48px;background:#5e5584"></div>
<div style="left:1919px;top:73px;width:1px;height:510px;background:#6a6a6a"></div>
<span class="t" style="left:1495px;top:82px;font-size:9.9px;font-weight:bold;color:#eeeef4">Composite</span>
<div style="left:1563px;top:77px;width:353px;height:20px;background-color:#7b6f9f;background-image:radial-gradient(#7380b4 0.5px,transparent 0.75px);background-size:5px 3px"><span class="t" style="left:3px;top:2px;font-family:'DejaVu Sans Mono','Liberation Mono',monospace;font-size:12.5px;color:#e4e2ee;transform:scaleX(.912);transform-origin:0 0">comp1</span></div>
<span class="t" style="left:1495px;top:100px;font-size:17px;font-weight:bold;color:#f0f0f0">?</span>
<div style="left:1513px;top:100px;width:18px;height:18px;background:linear-gradient(#4a84b8 0,#4a84b8 50%,#f0e040 50%,#f0e040 100%)"><span class="t" style="left:4px;top:-1px;font-size:17px;font-weight:bold;color:#f4f4f4;text-shadow:0 0 1px #223,0 0 1px #223">?</span></div>
<span class="t" style="left:1541px;top:100px;font-size:17px;font-weight:bold;color:#f0f0f0">i</span>
<svg viewBox="0 0 140 22" style="left:1780px;top:98px;width:140px;height:22px"><path d="M10 15.5 L11 12 L19 4 L22.6 7.2 L14.2 15 Z" fill="#9b99b4"/><ellipse cx="38" cy="10" rx="8" ry="5" fill="#9b99b4"/><path d="M33 13 L31 17 L37 14 Z" fill="#9b99b4"/><path d="M57 5 L67 8 L62 18 L52 15 Z" fill="#5e5584" stroke="#f2f2f2" stroke-width="1.3"/><path d="M60 5.6 L63 2.6 L65.5 7" fill="none" stroke="#f2f2f2" stroke-width="1.3"/><circle cx="82.3" cy="11" r="8.7" fill="#ececec"/><path d="M76.5 9.5 C76.5 6 79 5 81.5 5 C84.5 5 85.5 6.5 85.5 8.5 V11 H80 C78 11 77.6 12.6 77.6 13.5 C76.6 12.8 76.5 11 76.5 9.5Z" fill="#3f7fb8"/><path d="M88 12.5 C88 16 85.5 17 83 17 C80 17 79 15.5 79 13.5 V12 H84.5 C86.5 12 87 10.4 87 9.5 C87.9 10.2 88 11 88 12.5Z" fill="#f0dc3c"/><path d="M104 4.5 V17.5 M97.5 11 H110.5" stroke="#f2f2f2" stroke-width="3"/><circle cx="126" cy="11" r="7.6" fill="none" stroke="#f2f2f2" stroke-width="1.7"/><circle cx="126" cy="11" r="4.1" fill="none" stroke="#f2f2f2" stroke-width="1.6"/><circle cx="126" cy="11" r="1.4" fill="#f2f2f2"/></svg>
<span class="t" style="left:1501px;top:130px;font-size:10.1px;color:#c8c8c8">Composite</span>
<span class="t" style="left:1569px;top:130px;font-size:10.1px;color:#e4e4e4">Transform</span>
<span class="t" style="left:1633px;top:130px;font-size:10.1px;color:#c8c8c8">Common</span>
<div style="left:1562px;top:145px;width:64px;height:4px;background:#d8d8d8"></div>
<div style="left:1494px;top:148px;width:422px;height:1px;background:#f0f0f0"></div>
<span class="t" style="right:281px;top:158px;font-size:10.1px;color:#c4c4c4">Fixed Layer</span>
<div style="left:1644px;top:155px;width:272px;height:19px;background:#696969;border:1px solid #434343"><span class="t" style="left:5px;top:2px;font-size:10.1px;color:#c6c6c6">Input 1</span><svg viewBox="0 0 10 6" style="right:2px;top:6px;width:10px;height:6px"><path d="M0 0.5H10L5 5.5Z" fill="#c8c8c8"/></svg></div>
<span class="t" style="right:281px;top:180px;font-size:10.1px;color:#c4c4c4">Pre-Fit Overlay</span>
<div style="left:1644px;top:177px;width:272px;height:19px;background:#696969;border:1px solid #434343"><span class="t" style="left:5px;top:2px;font-size:10.1px;color:#c6c6c6">Native Resolution</span><svg viewBox="0 0 10 6" style="right:2px;top:6px;width:10px;height:6px"><path d="M0 0.5H10L5 5.5Z" fill="#c8c8c8"/></svg></div>
<span class="t" style="right:281px;top:202px;font-size:10.1px;color:#c4c4c4">Justify Horizontal</span>
<div style="left:1644px;top:199px;width:272px;height:19px;background:#696969;border:1px solid #434343"><span class="t" style="left:5px;top:2px;font-size:10.1px;color:#c6c6c6">Center</span><svg viewBox="0 0 10 6" style="right:2px;top:6px;width:10px;height:6px"><path d="M0 0.5H10L5 5.5Z" fill="#c8c8c8"/></svg></div>
<span class="t" style="right:281px;top:224px;font-size:10.1px;color:#c4c4c4">Justify Vertical</span>
<div style="left:1644px;top:221px;width:272px;height:19px;background:#696969;border:1px solid #434343"><span class="t" style="left:5px;top:2px;font-size:10.1px;color:#c6c6c6">Center</span><svg viewBox="0 0 10 6" style="right:2px;top:6px;width:10px;height:6px"><path d="M0 0.5H10L5 5.5Z" fill="#c8c8c8"/></svg></div>
<span class="t" style="right:281px;top:246px;font-size:10.1px;color:#c4c4c4">Extend Overlay</span>
<div style="left:1644px;top:243px;width:272px;height:19px;background:#696969;border:1px solid #434343"><span class="t" style="left:5px;top:2px;font-size:10.1px;color:#c6c6c6">Zero</span><svg viewBox="0 0 10 6" style="right:2px;top:6px;width:10px;height:6px"><path d="M0 0.5H10L5 5.5Z" fill="#c8c8c8"/></svg></div>
<span class="t" style="right:281px;top:268px;font-size:10.1px;color:#c4c4c4">Rotate</span>
<div style="left:1644px;top:264px;width:50px;height:20px;background:#5f5f5f"><span class="t" style="left:3px;top:3px;font-family:'DejaVu Sans Mono','Liberation Mono',monospace;font-size:11.5px;color:#d0d0d0">0</span></div>
<div style="left:1697px;top:265px;width:18px;height:18px;background:#d6d6d6"><div style="left:9px;top:8px;width:9px;height:1px;background:#333"></div></div>
<div style="left:1727px;top:273px;width:189px;height:2px;background:#383838"></div>
<div style="left:1718px;top:266px;width:10px;height:15px;background:#757575;border:1px solid #505868"></div>
<span class="t" style="right:281px;top:290px;font-size:10.1px;color:#c4c4c4">Translate</span>
<div style="left:1644px;top:286px;width:117px;height:20px;background:#5f5f5f"><span class="t" style="left:3px;top:3px;font-family:'DejaVu Sans Mono','Liberation Mono',monospace;font-size:11.5px;color:#d0d0d0">0</span></div>
<div style="left:1763px;top:286px;width:117px;height:20px;background:#5f5f5f"><span class="t" style="left:3px;top:3px;font-family:'DejaVu Sans Mono','Liberation Mono',monospace;font-size:11.5px;color:#d0d0d0">0</span></div>
<div style="left:1882px;top:287px;width:34px;height:18px;background:#6a6a6a;border:1px solid #404040"><span class="t" style="left:5px;top:1px;font-size:10.5px;color:#c8c8c8">F</span><svg viewBox="0 0 6 10" style="right:3px;top:3px;width:6px;height:10px"><path d="M0.5 0V10L5.5 5Z" fill="#d0d0d0"/></svg></div>
<span class="t" style="right:281px;top:312px;font-size:10.1px;color:#c4c4c4">Scale</span>
<div style="left:1644px;top:308px;width:135px;height:20px;background:#5f5f5f"><span class="t" style="left:3px;top:3px;font-family:'DejaVu Sans Mono','Liberation Mono',monospace;font-size:11.5px;color:#d0d0d0">1</span></div>
<div style="left:1781px;top:308px;width:135px;height:20px;background:#5f5f5f"><span class="t" style="left:3px;top:3px;font-family:'DejaVu Sans Mono','Liberation Mono',monospace;font-size:11.5px;color:#d0d0d0">1</span></div>
<span class="t" style="right:281px;top:334px;font-size:10.1px;color:#c4c4c4">Pivot</span>
<div style="left:1644px;top:330px;width:117px;height:20px;background:#5f5f5f"><span class="t" style="left:3px;top:3px;font-family:'DejaVu Sans Mono','Liberation Mono',monospace;font-size:11.5px;color:#d0d0d0">0.5</span></div>
<div style="left:1763px;top:330px;width:117px;height:20px;background:#5f5f5f"><span class="t" style="left:3px;top:3px;font-family:'DejaVu Sans Mono','Liberation Mono',monospace;font-size:11.5px;color:#d0d0d0">0.5</span></div>
<div style="left:1882px;top:331px;width:34px;height:18px;background:#6a6a6a;border:1px solid #404040"><span class="t" style="left:5px;top:1px;font-size:10.5px;color:#c8c8c8">F</span><svg viewBox="0 0 6 10" style="right:3px;top:3px;width:6px;height:10px"><path d="M0.5 0V10L5.5 5Z" fill="#d0d0d0"/></svg></div>
<span class="t" style="right:281px;top:356px;font-size:10.1px;color:#c4c4c4">Translate Step</span>
<div style="left:1644px;top:352px;width:117px;height:20px;background:#5f5f5f"><span class="t" style="left:3px;top:3px;font-family:'DejaVu Sans Mono','Liberation Mono',monospace;font-size:11.5px;color:#d0d0d0">0</span></div>
<div style="left:1763px;top:352px;width:117px;height:20px;background:#5f5f5f"><span class="t" style="left:3px;top:3px;font-family:'DejaVu Sans Mono','Liberation Mono',monospace;font-size:11.5px;color:#d0d0d0">0</span></div>
<div style="left:1882px;top:353px;width:34px;height:18px;background:#6a6a6a;border:1px solid #404040"><span class="t" style="left:5px;top:1px;font-size:10.5px;color:#c8c8c8">F</span><svg viewBox="0 0 6 10" style="right:3px;top:3px;width:6px;height:10px"><path d="M0.5 0V10L5.5 5Z" fill="#d0d0d0"/></svg></div>
<div style="left:1494px;top:399px;width:422px;height:100px;background:#7a7a7a"></div>
<div style="left:1494px;top:399px;width:20px;height:20px;background:#4c4c4c;border:1px solid #7a7a7a"></div>
<div style="left:1514px;top:399px;width:382px;height:20px;background:#646464;border:1px solid #7a7a7a"><span class="t" style="left:5px;top:3px;font-size:10.1px;color:#d0d0d0">Input OP</span></div>
<div style="left:1896px;top:399px;width:20px;height:20px;background:#4c4c4c;border:1px solid #7a7a7a"></div>
<div style="left:1494px;top:419px;width:20px;height:20px;background:#4e4e4e;border:1px solid #7a7a7a"></div>
<div style="left:1514px;top:419px;width:382px;height:20px;background:#5b5b5b;border:1px solid #7a7a7a"><span class="t" style="left:5px;top:4px;font-size:9.8px;color:#cacaca">null1</span></div>
<div style="left:1896px;top:419px;width:20px;height:20px;background:#5b5b5b;border:1px solid #7a7a7a"><svg viewBox="0 0 18 18" style="left:0;top:0;width:18px;height:18px"><path d="M4 3.5 L14 14.5 M14 3.5 L4 14.5" stroke="#c8203c" stroke-width="2.6"/></svg></div>
<div style="left:1494px;top:439px;width:20px;height:20px;background:#5b5b5b;border:1px solid #7a7a7a"><svg viewBox="0 0 18 18" style="left:0;top:0;width:18px;height:18px"><path d="M9 2.5 L15 9.5 H11.5 L12 14.5 H6 L6.5 9.5 H3 Z" fill="#4a88b8"/></svg></div>
<div style="left:1514px;top:439px;width:382px;height:20px;background:#5b5b5b;border:1px solid #7a7a7a"><span class="t" style="left:5px;top:4px;font-size:9.8px;color:#cacaca">VUMETER/out1</span></div>
<div style="left:1896px;top:439px;width:20px;height:20px;background:#5b5b5b;border:1px solid #7a7a7a"><svg viewBox="0 0 18 18" style="left:0;top:0;width:18px;height:18px"><path d="M4 3.5 L14 14.5 M14 3.5 L4 14.5" stroke="#c8203c" stroke-width="2.6"/></svg></div>
<div style="left:1494px;top:459px;width:20px;height:20px;background:#5b5b5b;border:1px solid #7a7a7a"><svg viewBox="0 0 18 18" style="left:0;top:0;width:18px;height:18px"><path d="M9 2.5 L15 9.5 H11.5 L12 14.5 H6 L6.5 9.5 H3 Z" fill="#4a88b8"/></svg></div>
<div style="left:1514px;top:459px;width:382px;height:20px;background:#5b5b5b;border:1px solid #7a7a7a"><span class="t" style="left:5px;top:4px;font-size:9.8px;color:#cacaca">VUMETER1/out1</span></div>
<div style="left:1896px;top:459px;width:20px;height:20px;background:#5b5b5b;border:1px solid #7a7a7a"><svg viewBox="0 0 18 18" style="left:0;top:0;width:18px;height:18px"><path d="M4 3.5 L14 14.5 M14 3.5 L4 14.5" stroke="#c8203c" stroke-width="2.6"/></svg></div>
<div style="left:1494px;top:479px;width:20px;height:20px;background:#5b5b5b;border:1px solid #7a7a7a"><svg viewBox="0 0 18 18" style="left:0;top:0;width:18px;height:18px"><path d="M9 2.5 L15 9.5 H11.5 L12 14.5 H6 L6.5 9.5 H3 Z" fill="#4a88b8"/></svg></div>
<div style="left:1514px;top:479px;width:382px;height:20px;background:#5b5b5b;border:1px solid #7a7a7a"><span class="t" style="left:5px;top:4px;font-size:9.8px;color:#cacaca">player/out2</span></div>
<div style="left:1896px;top:479px;width:20px;height:20px;background:#5b5b5b;border:1px solid #7a7a7a"><svg viewBox="0 0 18 18" style="left:0;top:0;width:18px;height:18px"><path d="M4 3.5 L14 14.5 M14 3.5 L4 14.5" stroke="#c8203c" stroke-width="2.6"/></svg></div>
<div style="left:0px;top:945px;width:1920px;height:90px;background:#39393b"></div>
<div style="left:0px;top:945px;width:1920px;height:1px;background:#5c5c5e"></div>
<div style="left:0px;top:1033px;width:1920px;height:2px;background:#5a5a5c"></div>
<div style="left:0px;top:73px;width:1px;height:873px;background:#404042"></div>
<div style="left:0px;top:946px;width:1px;height:89px;background:#68686a"></div>
<div style="left:4px;top:949px;width:272px;height:83px;background:#0a0915;border:1px solid #6a6a6c"></div>
<div style="left:5px;top:950px;width:270px;height:13px;background:#1e1f2b;border-bottom:1px solid #6a6a6c"></div>
<span class="t" style="left:10px;top:968px;font-size:10.2px;color:#b4b4b8">Start:</span>
<span class="t" style="left:70px;top:968px;font-size:10.2px;color:#78aaf0">1</span>
<span class="t" style="left:140px;top:968px;font-size:10.2px;color:#b4b4b8">End:</span>
<span class="t" style="left:200px;top:968px;font-size:10.2px;color:#78aaf0">600</span>
<span class="t" style="left:10px;top:983px;font-size:10.2px;color:#b4b4b8">RStart:</span>
<span class="t" style="left:70px;top:983px;font-size:10.2px;color:#78aaf0">1</span>
<span class="t" style="left:140px;top:983px;font-size:10.2px;color:#b4b4b8">REnd:</span>
<span class="t" style="left:200px;top:983px;font-size:10.2px;color:#78aaf0">600</span>
<span class="t" style="left:10px;top:998px;font-size:10.2px;color:#b4b4b8">FPS:</span>
<span class="t" style="left:70px;top:998px;font-size:10.2px;color:#78aaf0">60.0</span>
<span class="t" style="left:140px;top:998px;font-size:10.2px;color:#b4b4b8">Tempo:</span>
<span class="t" style="left:200px;top:998px;font-size:10.2px;color:#78aaf0">120.0</span>
<span class="t" style="left:10px;top:1013px;font-size:10.2px;color:#b4b4b8">ResetF:</span>
<span class="t" style="left:70px;top:1013px;font-size:10.2px;color:#78aaf0">1</span>
<span class="t" style="left:140px;top:1013px;font-size:10.2px;color:#b4b4b8">T Sig:</span>
<span class="t" style="left:200px;top:1013px;font-size:10.2px;color:#78aaf0">4</span>
<span class="t" style="left:235px;top:1013px;font-size:10.2px;color:#78aaf0">4</span>
<div style="left:279px;top:946px;width:1px;height:88px;background:#5c5c5e"></div>
<div style="left:280px;top:946px;width:1638px;height:14px;background:#0a0a0b;border-bottom:1px solid #5c5c5e"></div>
<span class="t" style="left:281px;top:947px;font-size:10px;line-height:12px;color:#c4c4c4">1</span>
<div style="left:415px;top:946px;width:1px;height:13px;background:#a4a4a4"></div>
<span class="t" style="left:418px;top:947px;font-size:10px;line-height:12px;color:#c4c4c4">51</span>
<div style="left:552px;top:946px;width:1px;height:13px;background:#a4a4a4"></div>
<span class="t" style="left:555px;top:947px;font-size:10px;line-height:12px;color:#c4c4c4">101</span>
<div style="left:689px;top:946px;width:1px;height:13px;background:#a4a4a4"></div>
<span class="t" style="left:692px;top:947px;font-size:10px;line-height:12px;color:#c4c4c4">151</span>
<div style="left:826px;top:946px;width:1px;height:13px;background:#a4a4a4"></div>
<span class="t" style="left:829px;top:947px;font-size:10px;line-height:12px;color:#c4c4c4">201</span>
<div style="left:963px;top:946px;width:1px;height:13px;background:#a4a4a4"></div>
<span class="t" style="left:966px;top:947px;font-size:10px;line-height:12px;color:#c4c4c4">251</span>
<div style="left:1100px;top:946px;width:1px;height:13px;background:#a4a4a4"></div>
<span class="t" style="left:1103px;top:947px;font-size:10px;line-height:12px;color:#c4c4c4">301</span>
<div style="left:1236px;top:946px;width:1px;height:13px;background:#a4a4a4"></div>
<span class="t" style="left:1239px;top:947px;font-size:10px;line-height:12px;color:#c4c4c4">351</span>
<div style="left:1373px;top:946px;width:1px;height:13px;background:#a4a4a4"></div>
<span class="t" style="left:1376px;top:947px;font-size:10px;line-height:12px;color:#c4c4c4">401</span>
<div style="left:1510px;top:946px;width:1px;height:13px;background:#a4a4a4"></div>
<span class="t" style="left:1513px;top:947px;font-size:10px;line-height:12px;color:#c4c4c4">451</span>
<div style="left:1647px;top:946px;width:1px;height:13px;background:#a4a4a4"></div>
<span class="t" style="left:1650px;top:947px;font-size:10px;line-height:12px;color:#c4c4c4">501</span>
<div style="left:1784px;top:946px;width:1px;height:13px;background:#a4a4a4"></div>
<span class="t" style="left:1787px;top:947px;font-size:10px;line-height:12px;color:#c4c4c4">551</span>
<span class="t" style="left:1898px;top:947px;font-size:10px;line-height:12px;color:#c4c4c4">600</span>
<div style="left:1632px;top:946px;width:2px;height:13px;background:#9ab4e8"></div>
<div style="left:280px;top:960px;width:1638px;height:10px;background:#1a1a1e"></div>
<div style="left:303px;top:961px;width:1590px;height:8px;background:#45547f"></div>
<div class="ctr" style="left:281px;top:961px;width:21px;height:8px;background:#666;border:1px solid #888;font-size:7px;color:#999;line-height:4px"><span style="position:static;margin-top:-4px">...</span></div>
<div class="ctr" style="left:1894px;top:961px;width:22px;height:8px;background:#666;border:1px solid #888;font-size:7px;color:#999;line-height:4px"><span style="position:static;margin-top:-4px">...</span></div>
<div style="left:280px;top:970px;width:1640px;height:1px;background:#5c5c5e"></div>
<div class="ctr" style="left:282px;top:973px;width:39px;height:39px;background:#41444c;border:1px solid #5e5e60;"><span style="position:static;font-family:'DejaVu Serif','Liberation Serif',serif;font-size:11px;color:#7c7e88">I</span></div>
<div class="ctr" style="left:324px;top:973px;width:68px;height:18px;background:#3a3a3c;border:1px solid #6a6a6c"><div class="ctr" style="left:1px;top:1px;width:64px;height:14px;background:#dc9f4e"><span style="position:static;font-size:10.5px;color:#7a1c12">TimeCode</span></div></div>
<div class="ctr" style="left:324px;top:992px;width:68px;height:19px;background:#41444c;border:1px solid #6a6a6c"><span style="position:static;font-size:10.5px;color:#c8cad8">Beats</span></div>
<div class="ctr" style="left:394px;top:973px;width:200px;height:39px;background:#000;border:1px solid #5e5e60"><span style="position:static;font-size:25.5px;color:#8ab6f8;letter-spacing:.3px;margin-top:1px">00:00:08.16</span></div>
<div class="ctr" style="left:596px;top:973px;width:135px;height:39px;background:#000;border:1px solid #5e5e60"><span style="position:static;font-size:25px;color:#8ab6f8;margin-top:1px">495</span></div>
<div style="left:733px;top:973px;width:39px;height:39px;background:#41444c;border:1px solid #5e5e60"><svg viewBox="2 0 39 39" style="left:-1px;top:-1px;width:39px;height:39px"><path d="M14 14.5V23.5" stroke="#c8cadb" stroke-width="1.4"/><path d="M19.5 14.5V23.5L15 19Z M24 14.5V23.5L19.5 19Z" fill="#c8cadb"/></svg></div>
<div style="left:774px;top:973px;width:39px;height:39px;background:#41444c;border:1px solid #5e5e60"><svg viewBox="2 0 39 39" style="left:-1px;top:-1px;width:39px;height:39px"><path d="M17.5 14.5V23.5M21 14.5V23.5" stroke="#c8cadb" stroke-width="1.6"/></svg></div>
<div style="left:815px;top:973px;width:39px;height:39px;background:#41444c;border:1px solid #5e5e60"><svg viewBox="2 0 39 39" style="left:-1px;top:-1px;width:39px;height:39px"><path d="M21 14.5V23.5L16.5 19Z" fill="#c8cadb"/></svg></div>
<div style="left:856px;top:973px;width:39px;height:39px;background:#3a3a3c;border:1px solid #6a6a6c"><div style="left:1px;top:1px;width:35px;height:35px;background:#c8914a"><svg viewBox="3 1 37 37" style="left:0;top:0;width:35px;height:35px"><path d="M17.5 14.5V23.5L22 19Z" fill="#6a1410"/></svg></div></div>
<div style="left:897px;top:973px;width:39px;height:39px;background:#41444c;border:1px solid #5e5e60"><svg viewBox="2 0 39 39" style="left:-1px;top:-1px;width:39px;height:39px"><path d="M17.5 19H21" stroke="#c8cadb" stroke-width="1"/></svg></div>
<div style="left:938px;top:973px;width:39px;height:39px;background:#41444c;border:1px solid #5e5e60"><svg viewBox="2 0 39 39" style="left:-1px;top:-1px;width:39px;height:39px"><path d="M15.5 19H22.5M19 15.5V22.5" stroke="#c8cadb" stroke-width="1"/></svg></div>
<span class="t" style="left:992px;top:976px;font-size:10.2px;color:#c8cad8">Range Limit</span>
<div class="ctr" style="left:980px;top:994px;width:43px;height:18px;background:#3a3a3c;border:1px solid #7a7a7c"><div class="ctr" style="left:1px;top:1px;width:39px;height:14px;background:#dc9f4e"><span style="position:static;font-size:10.5px;color:#7a1c12">Loop</span></div></div>
<div class="ctr" style="left:1024px;top:994px;width:45px;height:18px;background:#41444c;border:1px solid #7a7a7c"><span style="position:static;font-size:10.5px;color:#c8cad8">Once</span></div>
<div style="left:280px;top:1014px;width:1640px;height:1px;background:#5c5c5e"></div>
<div style="left:280px;top:1015px;width:1640px;height:18px;background:#0b0917"></div>
<div class="ctr" style="left:280px;top:1015px;width:17px;height:18px;background:#47578d"><span style="position:static;font-size:10.5px;color:#d8b0c0">/</span></div>
<span class="t" style="left:306px;top:1019px;font-size:10.2px;font-weight:bold;color:#4d5583">Time Path: /</span>
</div>
</body></html>
